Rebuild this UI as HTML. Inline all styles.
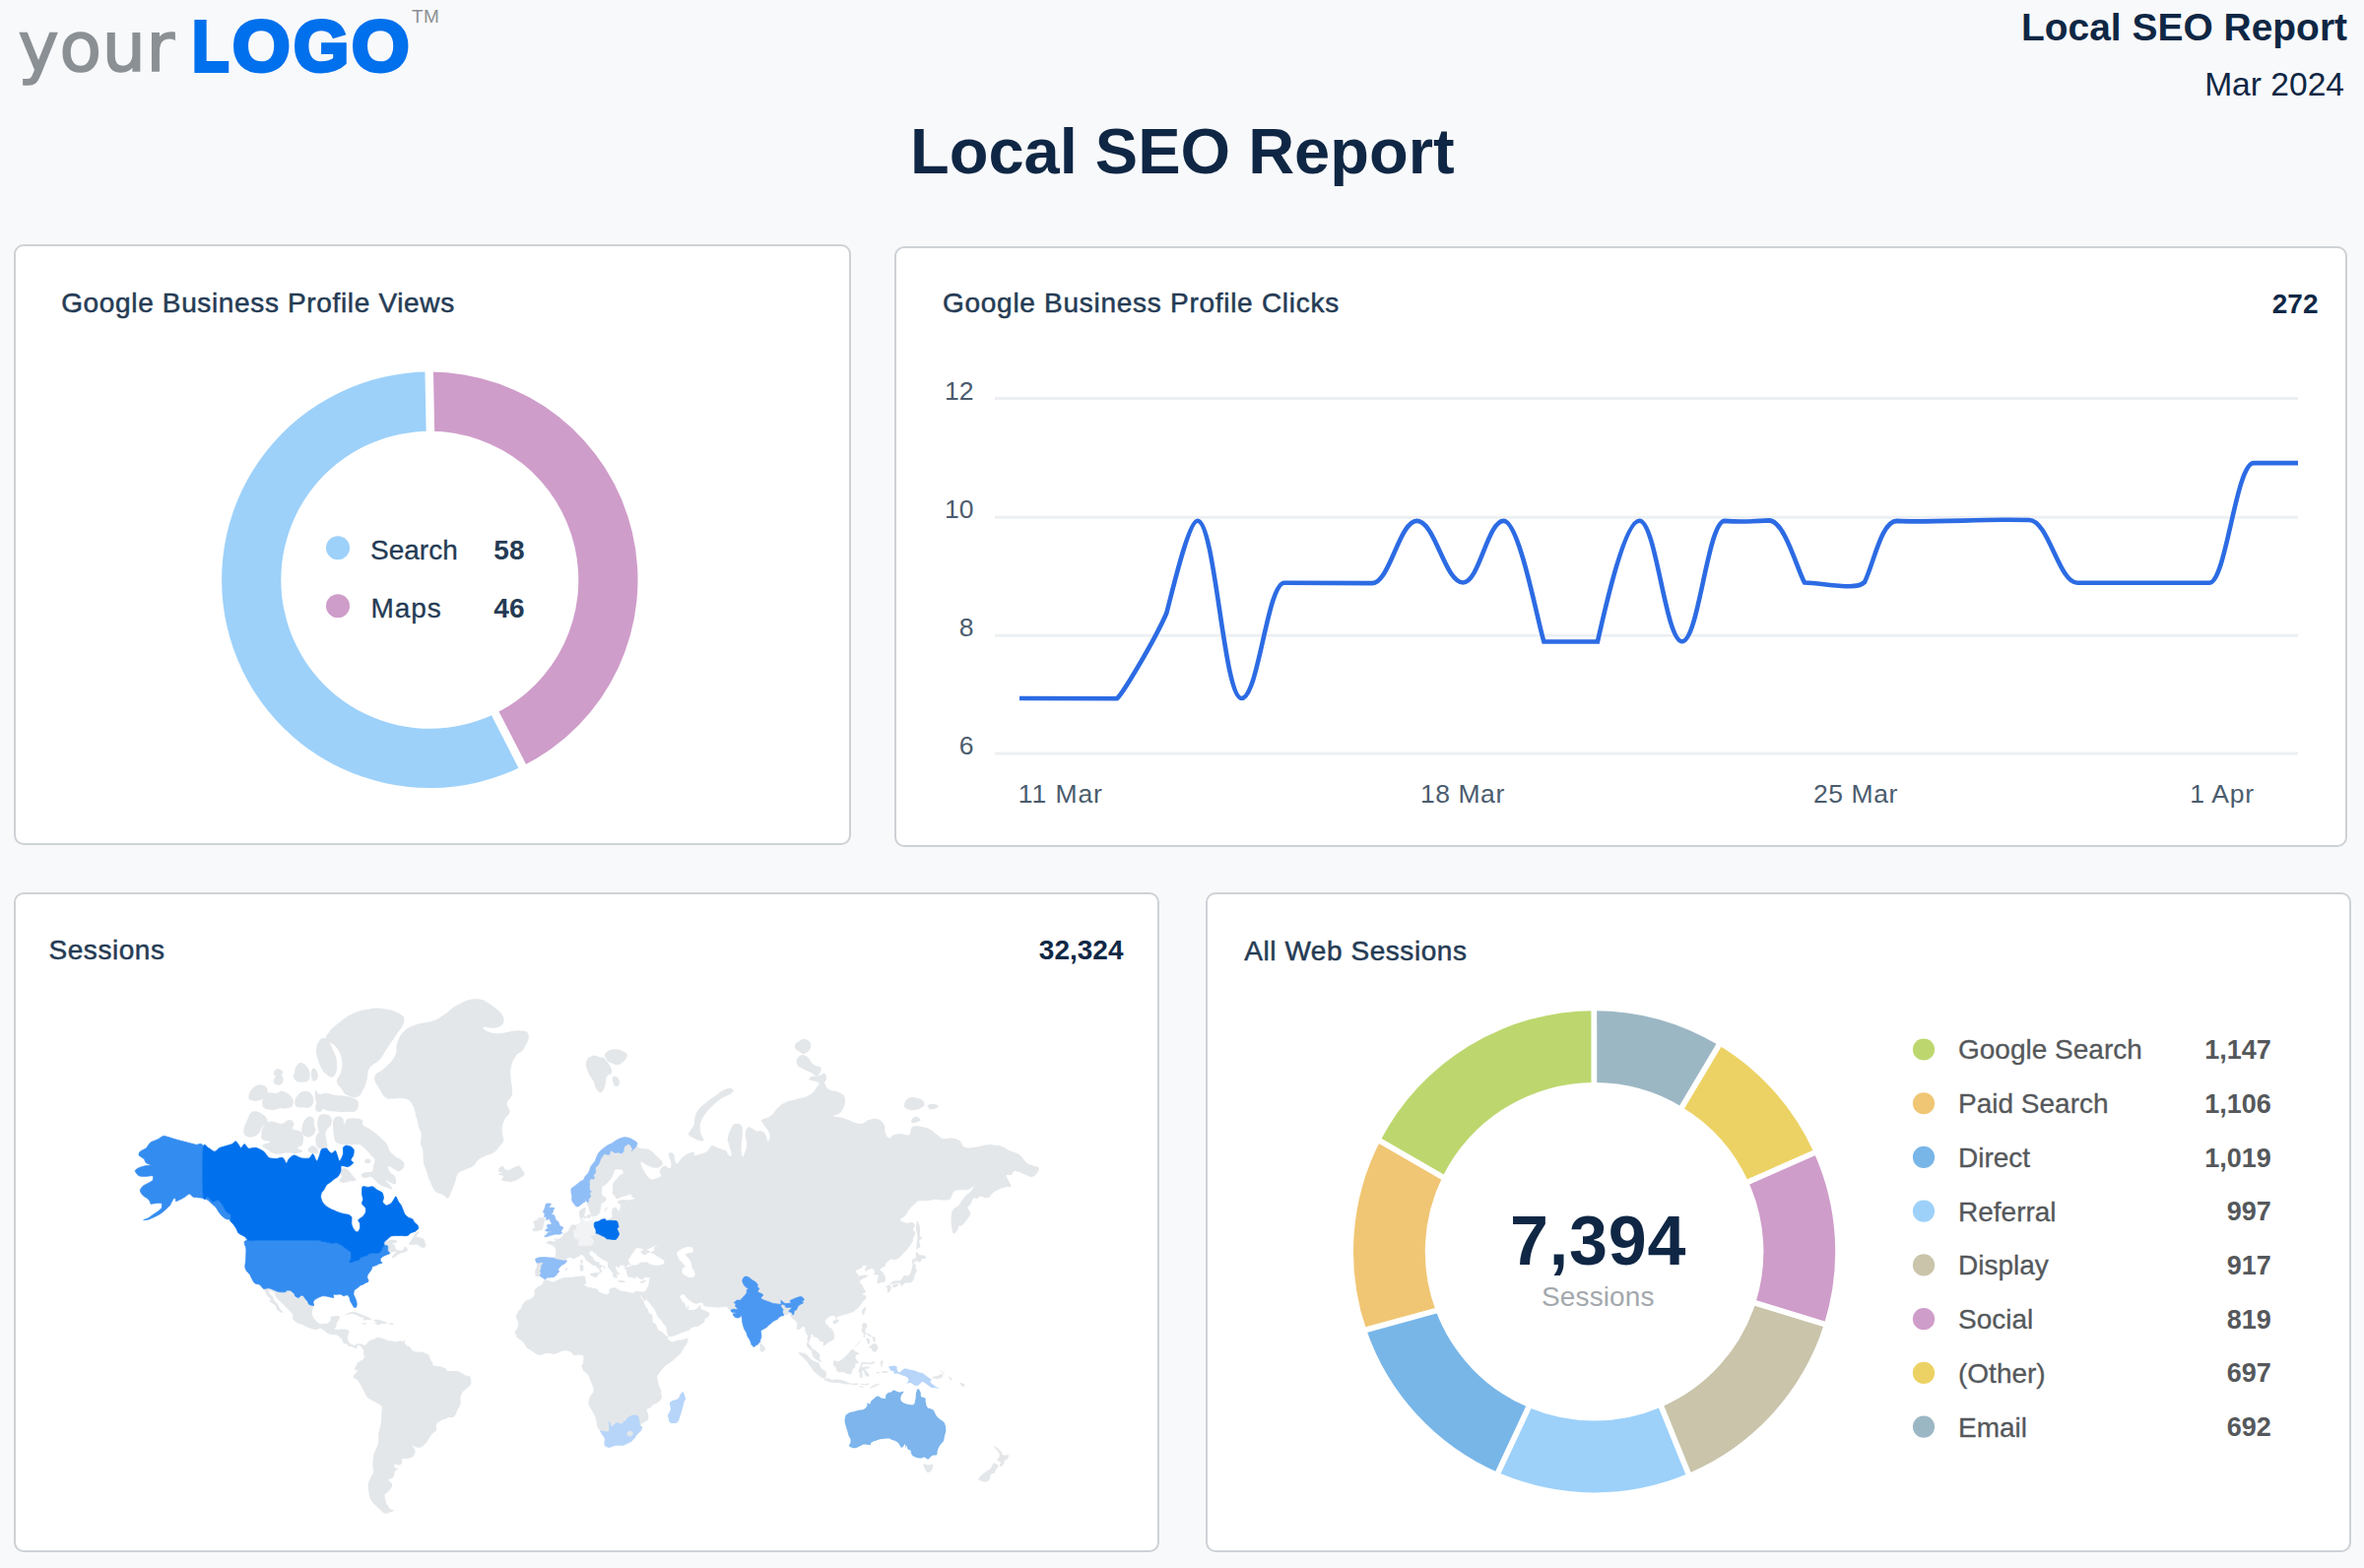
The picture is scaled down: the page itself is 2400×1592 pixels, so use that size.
<!DOCTYPE html>
<html lang="en"><head><meta charset="utf-8"><title>Local SEO Report</title><style>
*{margin:0;padding:0;box-sizing:border-box}
html,body{width:2400px;height:1592px;overflow:hidden;background:#f8f9fb;font-family:"Liberation Sans", sans-serif;}
.t{position:absolute;line-height:1;white-space:nowrap;}
.card{position:absolute;background:#fff;border:2px solid #cdd2d6;border-radius:10px;}
svg{position:absolute;left:0;top:0;overflow:visible}
</style></head>
<body>
<div class="card" style="left:14px;top:248px;width:850px;height:610px"></div>
<div class="card" style="left:908px;top:250px;width:1475px;height:610px"></div>
<div class="card" style="left:14px;top:906px;width:1163px;height:670px"></div>
<div class="card" style="left:1224px;top:906px;width:1163px;height:670px"></div>
<svg width="2400" height="1592" viewBox="0 0 2400 1592">
<path d="M435.71,377.60A211.2,211.2 0 0 1 530.27,777.94L502.78,724.38A151,151 0 0 0 436.91,437.80Z" fill="#cf9dca"/>
<path d="M530.27,777.94A211.2,211.2 0 1 1 435.71,377.60L436.91,437.80A151,151 0 1 0 502.78,724.38Z" fill="#9dd1fa"/>
<line x1="436.99" y1="441.80" x2="435.63" y2="373.60" stroke="#fff" stroke-width="8.5"/>
<line x1="500.95" y1="720.82" x2="532.10" y2="781.50" stroke="#fff" stroke-width="8.5"/>
<circle cx="343" cy="556.3" r="12" fill="#9dd1fa"/><circle cx="343" cy="615.2" r="12" fill="#cf9dca"/>
<line x1="1010" y1="404.5" x2="2333" y2="404.5" stroke="#edf0f3" stroke-width="3"/>
<line x1="1010" y1="525.3" x2="2333" y2="525.3" stroke="#edf0f3" stroke-width="3"/>
<line x1="1010" y1="645.2" x2="2333" y2="645.2" stroke="#edf0f3" stroke-width="3"/>
<line x1="1010" y1="765" x2="2333" y2="765" stroke="#edf0f3" stroke-width="3"/>
<path d="M1035,709 L1134,709.2 C1140,704 1172.3,650.1 1184.3,622.5 C1191.3,596.2 1206.8,528.7 1215.8,528.7 C1233.6,528.7 1242.5,709 1260.3,709 C1277.8,709 1286.5,591.7 1304,591.7 L1393,592.1 C1411,592.1 1420.5,528.9 1438.5,528.9 C1457,528.9 1466.9,591.5 1485.4,591.5 C1501.9,591.5 1510.1,528.9 1526.6,528.9 C1542.6,528.9 1561.4,633.5 1567.4,651.5 L1621.9,651.5 C1626.9,630 1648.4,528.7 1664.4,528.7 C1681.4,528.7 1690.7,651.3 1707.7,651.3 C1724.7,651.3 1733.5,528.9 1751,528.9 C1765,530 1782,529.3 1796,528.4 C1812,528.4 1825,580 1832,591.5 C1845,592 1865,595.5 1878,595.3 C1886,595.2 1890,594 1893,591 C1903,570 1910,528.9 1926,528.9 C1945,530.5 2000,528 2040,527.7 L2060,528 C2080,528.3 2090,591.8 2109,591.8 L2243,591.8 C2260,591.8 2270,470.1 2288,470.1 L2333,470.1" fill="none" stroke="#2c6be3" stroke-width="4.6" stroke-linejoin="miter" stroke-linecap="butt"/>
<path d="M1618.30,1026.20A244.6,244.6 0 0 1 1744.91,1061.34L1707.70,1123.91A171.8,171.8 0 0 0 1618.39,1099.00Z" fill="#9cb7c4"/>
<path d="M1744.91,1061.34A244.6,244.6 0 0 1 1841.69,1170.49L1775.09,1199.91A171.8,171.8 0 0 0 1707.70,1123.91Z" fill="#ecd264"/>
<path d="M1841.69,1170.49A244.6,244.6 0 0 1 1851.92,1344.23L1782.30,1322.92A171.8,171.8 0 0 0 1775.09,1199.91Z" fill="#cf9dca"/>
<path d="M1851.92,1344.23A244.6,244.6 0 0 1 1714.02,1496.02L1686.72,1428.52A171.8,171.8 0 0 0 1782.30,1322.92Z" fill="#c9c4aa"/>
<path d="M1714.02,1496.02A244.6,244.6 0 0 1 1520.87,1495.03L1551.75,1429.06A171.8,171.8 0 0 0 1686.72,1428.52Z" fill="#9dd1fa"/>
<path d="M1520.87,1495.03A244.6,244.6 0 0 1 1387.20,1350.07L1457.64,1330.85A171.8,171.8 0 0 0 1551.75,1429.06Z" fill="#78b6e8"/>
<path d="M1387.20,1350.07A244.6,244.6 0 0 1 1401.26,1158.58L1464.41,1195.03A171.8,171.8 0 0 0 1457.64,1330.85Z" fill="#f0c674"/>
<path d="M1401.26,1158.58A244.6,244.6 0 0 1 1618.30,1026.20L1618.39,1099.00A171.8,171.8 0 0 0 1464.41,1195.03Z" fill="#bdd76e"/>
<line x1="1618.39" y1="1103.00" x2="1618.30" y2="1022.20" stroke="#fff" stroke-width="5.8"/>
<line x1="1705.66" y1="1127.35" x2="1746.95" y2="1057.90" stroke="#fff" stroke-width="5.8"/>
<line x1="1771.43" y1="1201.53" x2="1845.35" y2="1168.88" stroke="#fff" stroke-width="5.8"/>
<line x1="1778.48" y1="1321.75" x2="1855.74" y2="1345.40" stroke="#fff" stroke-width="5.8"/>
<line x1="1685.22" y1="1424.81" x2="1715.52" y2="1499.73" stroke="#fff" stroke-width="5.8"/>
<line x1="1553.44" y1="1425.44" x2="1519.17" y2="1498.65" stroke="#fff" stroke-width="5.8"/>
<line x1="1461.50" y1="1329.80" x2="1383.34" y2="1351.12" stroke="#fff" stroke-width="5.8"/>
<line x1="1467.88" y1="1197.03" x2="1397.80" y2="1156.58" stroke="#fff" stroke-width="5.8"/>
<circle cx="1953" cy="1065.50" r="11.1" fill="#bdd76e"/>
<circle cx="1953" cy="1120.23" r="11.1" fill="#f0c674"/>
<circle cx="1953" cy="1174.96" r="11.1" fill="#78b6e8"/>
<circle cx="1953" cy="1229.69" r="11.1" fill="#9dd1fa"/>
<circle cx="1953" cy="1284.42" r="11.1" fill="#c9c4aa"/>
<circle cx="1953" cy="1339.15" r="11.1" fill="#cf9dca"/>
<circle cx="1953" cy="1393.88" r="11.1" fill="#ecd264"/>
<circle cx="1953" cy="1448.61" r="11.1" fill="#9cb7c4"/>
<g id="worldmap" stroke-linejoin="round">
<path d="M267.5,1308.4C268.7,1307.7 270.0,1307.2 273.7,1307.9C277.3,1308.7 279.3,1310.8 283.1,1311.6C287.0,1312.5 288.6,1311.9 290.3,1311.6C292.0,1311.3 289.3,1310.6 290.3,1310.3C291.3,1310.0 292.7,1309.6 294.7,1310.3C296.6,1311.0 297.6,1312.1 298.8,1313.5C300.0,1314.8 298.7,1315.1 299.8,1316.1C300.9,1317.0 302.1,1317.7 303.4,1317.6C304.6,1317.5 304.1,1316.0 305.2,1315.5C306.2,1315.1 306.5,1314.6 307.7,1315.5C309.0,1316.4 309.4,1318.0 310.5,1319.4C311.7,1320.8 311.9,1320.3 312.6,1321.4C313.3,1322.6 312.2,1323.3 313.6,1324.2C315.0,1325.2 317.6,1324.1 318.5,1325.5C319.3,1326.9 317.5,1328.1 317.2,1330.2C316.8,1332.2 316.6,1332.5 316.9,1334.3C317.2,1336.2 317.4,1336.2 318.5,1338.0C319.5,1339.7 319.9,1340.3 321.5,1341.8C323.2,1343.2 323.6,1343.7 325.4,1344.2C327.2,1344.6 327.4,1343.9 329.2,1343.7C331.0,1343.5 331.6,1344.0 333.1,1343.2C334.5,1342.4 334.6,1341.8 335.4,1340.4C336.1,1338.9 334.6,1338.0 336.1,1337.0C337.7,1336.0 339.9,1336.1 342.0,1336.0C344.1,1336.0 344.5,1336.1 345.1,1336.8C345.7,1337.4 345.0,1337.7 344.6,1338.7C344.2,1339.7 344.0,1339.9 343.3,1341.1C342.6,1342.2 342.2,1342.3 341.8,1343.7C341.3,1345.1 341.7,1345.6 341.3,1347.0C340.8,1348.4 339.2,1348.9 339.7,1349.6C340.2,1350.2 341.6,1349.8 343.3,1349.8C345.0,1349.8 345.3,1349.6 347.1,1349.6C348.9,1349.6 349.3,1349.3 351.0,1349.8C352.7,1350.3 353.7,1350.7 354.3,1351.7C355.0,1352.7 354.1,1352.6 353.8,1354.0C353.5,1355.3 353.1,1355.9 353.0,1357.5C352.9,1359.1 352.9,1359.6 353.3,1360.9C353.7,1362.2 353.9,1362.2 354.8,1363.2C355.8,1364.2 356.2,1364.4 357.4,1365.0C358.6,1365.6 358.5,1365.9 359.9,1365.7C361.4,1365.5 362.0,1364.6 363.5,1364.3C365.0,1364.1 365.0,1364.1 366.3,1364.6C367.7,1365.0 368.9,1365.0 369.4,1366.2C369.9,1367.3 368.8,1368.9 368.4,1369.6C368.0,1370.2 368.1,1369.5 367.6,1368.9C367.1,1368.3 367.2,1367.8 366.3,1367.1C365.4,1366.3 364.7,1365.7 363.8,1365.7C362.9,1365.8 363.1,1366.4 362.5,1367.3C361.9,1368.1 362.4,1369.3 361.2,1369.3C360.0,1369.3 358.9,1367.8 357.4,1367.3C355.9,1366.8 355.7,1367.5 354.8,1367.3C353.9,1367.1 354.1,1367.2 353.5,1366.6C352.9,1366.0 353.3,1365.4 352.3,1364.8C351.2,1364.2 350.2,1364.5 349.2,1363.9C348.2,1363.2 348.4,1363.0 347.9,1362.1C347.4,1361.1 347.9,1360.8 347.1,1359.8C346.4,1358.7 345.7,1358.4 344.6,1357.5C343.5,1356.6 344.0,1356.4 342.5,1355.8C341.0,1355.3 340.4,1355.6 338.2,1355.2C336.0,1354.7 334.9,1354.7 333.1,1354.0C331.3,1353.3 332.0,1353.2 330.5,1352.1C329.0,1351.1 328.2,1350.1 326.7,1349.3C325.2,1348.6 325.6,1348.7 324.1,1348.9C322.6,1349.0 322.1,1350.0 320.3,1350.0C318.5,1350.1 318.5,1349.7 316.4,1349.1C314.4,1348.5 313.9,1348.4 311.6,1347.3C309.2,1346.3 308.0,1345.4 306.2,1344.6C304.3,1343.8 305.1,1344.6 303.6,1343.9C302.1,1343.3 301.3,1343.0 299.8,1341.8C298.3,1340.6 297.8,1340.3 297.2,1338.7C296.6,1337.1 297.8,1336.6 297.2,1335.1C296.7,1333.5 296.1,1333.6 294.9,1332.1C293.7,1330.7 293.4,1330.3 292.1,1328.9C290.8,1327.6 290.7,1327.6 289.5,1326.5C288.3,1325.3 288.5,1325.4 287.0,1324.0C285.5,1322.5 284.6,1321.6 283.1,1320.2C281.6,1318.7 281.5,1318.8 280.6,1317.6C279.7,1316.4 279.9,1316.4 279.3,1315.0C278.7,1313.7 279.4,1312.9 278.0,1311.9C276.6,1310.8 274.3,1310.1 273.4,1310.6C272.5,1311.0 273.4,1312.4 274.2,1313.7C275.0,1315.1 275.8,1315.1 276.7,1316.3C277.6,1317.5 277.4,1317.7 278.0,1318.9C278.6,1320.1 278.4,1320.3 279.3,1321.4C280.2,1322.6 281.0,1322.8 281.9,1324.0C282.8,1325.1 282.4,1325.2 283.1,1326.5C283.9,1327.7 284.0,1328.3 284.9,1329.4C285.8,1330.6 286.7,1330.6 287.0,1331.4C287.2,1332.2 286.6,1332.8 286.0,1332.9C285.4,1333.0 285.7,1332.8 284.4,1331.9C283.2,1331.0 281.6,1330.2 280.6,1328.9C279.6,1327.7 281.0,1327.7 280.1,1326.5C279.2,1325.2 278.4,1324.8 276.7,1323.5C275.1,1322.1 273.3,1321.4 272.9,1320.7C272.5,1319.9 274.8,1320.9 274.9,1320.2C275.1,1319.4 274.4,1318.8 273.4,1317.6C272.5,1316.4 271.9,1316.5 270.9,1315.0C269.8,1313.5 269.6,1312.6 268.8,1311.1C268.0,1309.6 266.4,1309.2 267.5,1308.4Z" fill="#e4e7ea"/>
<path d="M350.0,1335.3C350.3,1334.9 352.5,1333.4 354.8,1332.6C357.1,1331.9 357.6,1331.9 359.9,1332.1C362.3,1332.4 362.7,1333.0 365.1,1333.8C367.4,1334.7 367.8,1334.8 370.2,1335.8C372.6,1336.8 373.6,1337.4 375.3,1338.2C377.0,1339.0 377.6,1339.0 377.3,1339.4C377.0,1339.8 376.1,1339.9 374.0,1340.1C371.9,1340.3 369.4,1340.6 368.4,1340.2C367.4,1339.8 370.1,1339.1 369.7,1338.4C369.2,1337.8 368.3,1338.3 366.3,1337.5C364.4,1336.7 363.3,1335.9 361.2,1335.1C359.1,1334.3 359.2,1334.2 357.4,1334.1C355.6,1334.0 355.3,1334.3 353.5,1334.6C351.8,1334.9 349.7,1335.8 350.0,1335.3Z" fill="#e4e7ea"/>
<path d="M376.8,1343.7C376.8,1343.9 380.1,1343.8 381.7,1344.2C383.3,1344.5 382.3,1345.2 383.7,1345.1C385.2,1345.1 386.1,1344.2 388.1,1343.9C390.1,1343.7 391.3,1344.3 392.2,1343.9C393.1,1343.6 392.8,1343.1 391.9,1342.5C391.1,1341.9 390.4,1341.9 388.6,1341.3C386.8,1340.8 386.4,1340.4 384.3,1340.1C382.2,1339.8 380.4,1339.6 379.7,1340.1C378.9,1340.6 380.7,1341.5 381.2,1342.3C381.7,1343.0 383.0,1342.9 382.0,1343.2C380.9,1343.5 376.9,1343.5 376.8,1343.7Z" fill="#e4e7ea"/>
<path d="M366.9,1344.0C367.9,1344.4 370.9,1344.9 372.0,1344.8C373.0,1344.6 372.5,1343.9 371.5,1343.6C370.4,1343.3 368.7,1343.3 367.6,1343.5C366.5,1343.6 365.8,1343.7 366.9,1344.0Z" fill="#e4e7ea"/>
<path d="M395.3,1344.6C396.2,1344.9 398.2,1344.8 399.1,1344.5C400.0,1344.3 400.0,1343.8 399.1,1343.6C398.2,1343.3 396.2,1343.2 395.3,1343.5C394.4,1343.7 394.4,1344.4 395.3,1344.6Z" fill="#e4e7ea"/>
<path d="M369.4,1366.2C370.2,1365.0 370.8,1365.8 372.0,1364.8C373.1,1363.8 373.1,1362.8 374.3,1361.8C375.5,1360.8 375.7,1361.0 377.1,1360.5C378.5,1359.9 378.9,1359.9 380.4,1359.3C381.9,1358.7 382.1,1357.9 383.5,1357.7C384.9,1357.5 385.1,1358.0 386.6,1358.4C388.1,1358.8 388.2,1358.7 389.9,1359.3C391.6,1359.9 391.8,1360.5 393.7,1361.1C395.7,1361.7 396.4,1361.6 398.3,1361.8C400.3,1362.1 400.4,1362.3 402.2,1362.3C404.0,1362.2 404.4,1361.6 406.0,1361.6C407.6,1361.6 407.8,1361.5 409.1,1362.3C410.4,1363.0 410.6,1363.8 411.7,1364.8C412.7,1365.8 412.6,1365.9 413.7,1366.6C414.8,1367.3 415.2,1366.9 416.3,1367.8C417.3,1368.7 417.1,1369.4 418.3,1370.5C419.5,1371.5 419.5,1371.8 421.4,1372.3C423.3,1372.8 424.7,1372.4 426.5,1372.5C428.3,1372.6 427.4,1372.2 429.1,1372.7C430.7,1373.3 431.9,1374.0 433.4,1374.8C434.9,1375.5 434.5,1374.4 435.5,1375.9C436.4,1377.4 436.6,1379.5 437.5,1381.3C438.4,1383.1 438.9,1382.5 439.3,1383.6C439.7,1384.6 438.4,1385.0 439.3,1385.8C440.2,1386.6 441.3,1386.8 443.1,1387.1C444.9,1387.5 444.9,1386.9 447.0,1387.4C449.1,1387.8 450.5,1388.2 452.1,1389.2C453.7,1390.1 452.1,1390.7 453.9,1391.4C455.7,1392.1 457.2,1391.9 459.8,1392.1C462.3,1392.3 462.8,1391.9 464.9,1392.3C467.0,1392.8 466.9,1393.1 468.7,1394.1C470.5,1395.1 470.7,1395.8 472.6,1396.6C474.5,1397.4 475.6,1396.2 476.9,1397.5C478.2,1398.8 478.0,1400.0 478.2,1402.0C478.4,1404.0 478.7,1404.4 477.7,1406.1C476.7,1407.9 475.4,1408.2 473.9,1409.5C472.4,1410.9 472.5,1410.5 471.3,1411.8C470.1,1413.2 469.6,1413.4 468.7,1415.3C467.8,1417.2 467.8,1417.5 467.5,1419.9C467.2,1422.4 467.9,1423.6 467.5,1425.8C467.0,1428.0 466.4,1427.8 465.7,1429.3C464.9,1430.9 464.9,1430.8 464.1,1432.4C463.4,1434.1 463.4,1435.0 462.3,1436.5C461.3,1438.1 461.3,1438.4 459.8,1439.0C458.3,1439.5 457.7,1438.6 455.9,1439.0C454.1,1439.4 453.9,1440.0 452.1,1440.7C450.3,1441.4 450.1,1441.0 448.3,1441.9C446.5,1442.8 445.7,1443.3 444.4,1444.6C443.2,1446.0 443.2,1445.9 442.9,1447.6C442.5,1449.4 443.7,1450.4 442.9,1452.2C442.0,1454.0 441.0,1453.3 439.3,1455.3C437.6,1457.2 437.0,1458.4 435.5,1460.5C434.0,1462.7 434.1,1462.9 432.9,1464.5C431.7,1466.1 431.8,1466.0 430.3,1467.2C428.9,1468.4 428.4,1469.1 426.8,1469.6C425.1,1470.2 425.3,1470.0 423.4,1469.6C421.6,1469.3 419.4,1467.6 418.8,1468.0C418.2,1468.4 420.3,1469.9 420.9,1471.3C421.5,1472.7 421.6,1472.4 421.4,1474.1C421.1,1475.7 421.0,1476.9 419.8,1478.3C418.6,1479.8 418.6,1479.6 416.3,1480.3C413.9,1481.0 411.8,1481.0 409.9,1481.2C407.9,1481.4 408.5,1480.2 408.1,1481.2C407.6,1482.2 408.8,1484.1 408.1,1485.6C407.3,1487.1 406.4,1487.4 404.7,1487.7C403.1,1487.9 401.8,1485.9 400.9,1486.5C400.0,1487.0 400.1,1488.9 400.9,1490.1C401.7,1491.3 404.2,1490.7 404.2,1491.6C404.2,1492.5 402.0,1492.2 400.9,1494.0C399.8,1495.9 401.1,1497.4 399.6,1499.4C398.1,1501.4 394.8,1500.7 394.5,1502.6C394.2,1504.5 398.3,1504.8 398.3,1507.5C398.3,1510.2 396.3,1511.9 394.5,1514.3C392.7,1516.7 391.3,1515.5 390.7,1517.8C390.1,1520.1 391.5,1522.2 391.9,1524.3C392.4,1526.4 391.5,1524.9 392.7,1526.9C393.9,1528.8 395.3,1531.1 397.1,1532.6C398.9,1534.1 400.7,1532.7 400.4,1533.4C400.1,1534.0 398.0,1534.6 395.8,1535.3C393.5,1536.0 393.0,1537.1 390.7,1536.5C388.3,1535.9 387.6,1534.4 385.5,1532.6C383.4,1530.8 383.5,1530.5 381.7,1528.7C379.9,1527.0 379.4,1527.2 377.9,1525.0C376.4,1522.9 376.2,1522.5 375.3,1519.6C374.4,1516.7 374.3,1515.8 374.0,1512.6C373.7,1509.4 373.4,1508.9 374.0,1505.8C374.6,1502.8 375.4,1502.0 376.6,1499.4C377.8,1496.8 378.7,1497.0 379.1,1494.7C379.6,1492.3 378.5,1491.9 378.4,1489.5C378.3,1487.0 378.4,1486.7 378.6,1484.1C378.8,1481.5 378.8,1480.3 379.1,1478.3C379.4,1476.3 379.3,1477.1 379.9,1475.5C380.5,1473.8 380.7,1473.9 381.7,1471.3C382.7,1468.7 383.4,1467.9 384.0,1464.5C384.6,1461.1 383.9,1459.9 384.3,1456.6C384.6,1453.2 384.9,1453.1 385.5,1450.2C386.1,1447.2 386.4,1447.1 386.8,1443.9C387.2,1440.7 387.2,1439.4 387.3,1436.5C387.5,1433.7 387.6,1433.7 387.6,1431.7C387.6,1429.7 388.1,1429.4 387.3,1427.9C386.6,1426.4 385.9,1426.4 384.3,1425.3C382.6,1424.3 382.5,1424.5 380.4,1423.4C378.3,1422.3 377.3,1422.0 375.3,1420.6C373.3,1419.2 373.3,1419.2 372.0,1417.4C370.7,1415.6 370.7,1414.9 369.7,1413.0C368.7,1411.1 368.7,1411.1 367.6,1409.1C366.5,1407.1 366.2,1406.4 365.1,1404.5C363.9,1402.7 364.1,1402.5 362.8,1401.1C361.4,1399.8 360.3,1400.0 359.4,1398.9C358.6,1397.8 358.6,1397.6 359.2,1396.4C359.7,1395.1 360.9,1394.6 361.7,1393.5C362.6,1392.3 363.1,1392.0 362.8,1391.4C362.4,1390.8 360.7,1391.8 360.2,1391.0C359.7,1390.2 360.2,1389.3 360.7,1388.0C361.2,1386.8 361.8,1386.7 362.2,1385.8C362.7,1384.9 361.8,1384.8 362.5,1384.0C363.2,1383.2 364.3,1383.0 365.1,1382.4C365.8,1381.9 364.7,1382.4 365.6,1381.8C366.5,1381.1 367.9,1380.8 368.9,1379.7C369.9,1378.7 369.7,1378.7 369.7,1377.2C369.7,1375.8 369.0,1374.8 368.9,1373.4C368.8,1372.0 369.3,1372.0 369.2,1371.2C369.0,1370.3 368.3,1370.7 368.4,1369.6C368.4,1368.4 368.6,1367.3 369.4,1366.2Z" fill="#e4e7ea"/>
<path d="M454.7,1216.6C452.9,1216.7 452.2,1214.3 449.5,1212.9C446.9,1211.5 445.5,1212.4 443.1,1210.6C440.8,1208.9 440.8,1208.0 439.3,1205.4C437.8,1202.8 437.8,1201.7 436.7,1199.5C435.7,1197.2 435.8,1198.3 434.9,1195.9C434.1,1193.4 434.0,1192.3 432.9,1189.0C431.8,1185.7 431.1,1184.8 430.3,1181.8C429.6,1178.7 429.9,1179.5 429.6,1175.9C429.3,1172.4 429.7,1170.2 429.1,1166.7C428.5,1163.2 427.3,1164.3 427.0,1160.9C426.7,1157.4 428.2,1155.7 427.8,1152.0C427.4,1148.2 426.4,1148.7 425.2,1144.7C424.0,1140.6 424.2,1139.9 422.7,1134.6C421.2,1129.3 421.5,1126.4 418.8,1121.9C416.1,1117.5 415.9,1117.0 411.1,1115.6C406.4,1114.1 402.8,1115.8 398.3,1115.6C393.9,1115.3 394.9,1116.9 391.9,1114.6C389.0,1112.4 388.2,1110.9 385.5,1105.9C382.9,1101.0 379.2,1098.4 380.4,1093.3C381.6,1088.3 385.9,1089.2 390.7,1084.2C395.4,1079.2 397.9,1078.0 400.9,1071.9C403.9,1065.8 401.1,1064.2 403.5,1058.3C405.8,1052.3 406.4,1050.5 411.1,1046.2C415.9,1041.9 417.4,1042.0 423.9,1039.7C430.5,1037.5 432.7,1038.8 439.3,1036.4C445.9,1034.0 446.1,1033.2 452.1,1029.4C458.1,1025.6 457.7,1023.7 464.9,1020.1C472.1,1016.6 475.1,1014.2 482.8,1014.2C490.6,1014.2 491.6,1015.7 498.2,1020.1C504.8,1024.5 509.2,1027.6 511.0,1032.9C512.8,1038.3 510.6,1040.7 505.9,1043.0C501.1,1045.4 491.1,1041.5 490.5,1043.0C489.9,1044.5 494.9,1048.6 503.3,1049.3C511.7,1050.1 518.6,1045.9 526.3,1046.2C534.1,1046.6 535.4,1046.4 536.6,1050.9C537.8,1055.3 534.4,1060.3 531.5,1065.2C528.5,1070.2 526.8,1067.5 523.8,1071.9C520.8,1076.3 519.9,1078.7 518.7,1084.2C517.5,1089.8 518.4,1089.3 518.7,1095.5C519.0,1101.7 520.8,1105.1 519.9,1110.8C519.0,1116.6 515.4,1115.9 514.8,1120.1C514.2,1124.3 518.0,1124.9 517.4,1128.8C516.8,1132.8 514.1,1132.9 512.3,1137.0C510.5,1141.0 510.0,1141.9 509.7,1146.2C509.4,1150.5 510.7,1152.5 511.0,1155.5C511.3,1158.4 512.2,1156.5 511.0,1158.9C509.8,1161.2 508.2,1162.7 505.9,1165.4C503.5,1168.2 503.7,1168.6 500.7,1170.5C497.8,1172.4 496.6,1171.9 493.1,1173.5C489.5,1175.2 488.4,1175.3 485.4,1177.7C482.4,1180.2 483.5,1181.7 480.3,1184.0C477.0,1186.4 474.9,1186.1 471.3,1187.9C467.7,1189.7 467.0,1189.0 464.9,1191.7C462.8,1194.4 463.5,1196.2 462.3,1199.5C461.1,1202.8 461.0,1202.8 459.8,1205.9C458.6,1208.9 458.4,1210.0 457.2,1212.5C456.0,1215.0 456.5,1216.5 454.7,1216.6Z" fill="#e4e7ea"/>
<path d="M505.9,1189.0C505.9,1187.5 507.6,1184.3 509.7,1184.0C511.8,1183.8 512.1,1187.5 514.8,1187.9C517.5,1188.3 518.5,1186.8 521.2,1185.7C523.9,1184.7 524.3,1183.1 526.3,1183.5C528.4,1183.9 528.5,1185.5 529.9,1187.4C531.4,1189.3 532.7,1189.8 532.5,1191.7C532.2,1193.6 531.5,1193.6 528.9,1195.4C526.3,1197.2 524.5,1198.5 521.2,1199.5C517.9,1200.4 517.6,1199.8 514.8,1199.5C512.0,1199.1 510.1,1199.1 509.2,1197.9C508.3,1196.7 511.8,1195.7 511.0,1194.3C510.2,1193.0 506.2,1193.1 505.9,1192.2C505.6,1191.4 509.7,1191.4 509.7,1190.6C509.7,1189.9 505.9,1190.5 505.9,1189.0Z" fill="#e4e7ea"/>
<path d="M398.3,1207.3C397.7,1208.0 395.6,1206.7 393.2,1205.9C390.8,1205.1 390.2,1204.8 388.1,1203.9C386.0,1203.0 386.1,1203.4 384.3,1202.0C382.5,1200.6 382.2,1199.6 380.4,1197.9C378.6,1196.3 378.7,1195.3 376.6,1194.9C374.5,1194.4 373.6,1195.9 371.5,1195.9C369.4,1195.9 368.5,1195.8 367.6,1194.9C366.7,1193.9 366.4,1192.8 367.6,1191.7C368.8,1190.6 370.4,1190.7 372.7,1190.1C375.1,1189.5 376.4,1190.5 377.9,1189.0C379.4,1187.5 378.5,1186.1 379.1,1183.5C379.7,1180.8 381.0,1180.2 380.4,1177.7C379.8,1175.3 378.4,1175.1 376.6,1172.9C374.8,1170.8 374.5,1170.5 372.7,1168.6C370.9,1166.7 370.7,1166.3 368.9,1164.8C367.1,1163.3 367.7,1162.8 365.1,1162.2C362.4,1161.6 361.0,1162.2 357.4,1162.2C353.8,1162.2 353.3,1162.7 349.7,1162.2C346.1,1161.7 344.4,1161.8 342.0,1160.2C339.6,1158.6 340.4,1159.1 339.5,1155.5C338.6,1151.8 338.2,1149.4 338.2,1144.7C338.2,1140.0 337.4,1137.7 339.5,1135.4C341.6,1133.0 344.8,1133.3 347.1,1134.6C349.5,1135.9 348.5,1140.5 349.7,1140.9C350.9,1141.3 350.5,1137.5 352.3,1136.2C354.1,1134.9 355.3,1135.6 357.4,1135.4C359.5,1135.2 358.8,1135.0 361.2,1135.4C363.6,1135.8 365.8,1135.3 367.6,1137.0C369.4,1138.6 367.1,1140.3 368.9,1142.4C370.7,1144.6 372.0,1143.9 375.3,1146.2C378.6,1148.4 380.0,1149.5 383.0,1152.0C386.0,1154.4 385.7,1154.4 388.1,1156.8C390.5,1159.2 391.4,1159.4 393.2,1162.2C395.0,1164.9 393.7,1165.7 395.8,1168.6C397.9,1171.5 399.5,1172.6 402.2,1174.8C404.9,1176.9 405.4,1175.8 407.3,1177.7C409.2,1179.6 410.7,1180.3 410.4,1182.9C410.1,1185.5 408.2,1188.0 406.0,1189.0C403.8,1190.0 403.6,1188.5 400.9,1187.4C398.2,1186.2 395.7,1183.4 394.5,1184.0C393.3,1184.7 394.3,1187.7 395.8,1190.1C397.3,1192.5 399.5,1191.6 400.9,1194.3C402.3,1197.1 402.6,1200.4 401.7,1202.0C400.8,1203.5 399.3,1201.8 397.1,1201.0C394.8,1200.1 392.2,1198.0 391.9,1198.4C391.6,1198.9 394.3,1200.9 395.8,1202.9C397.3,1205.0 398.9,1206.6 398.3,1207.3Z" fill="#e4e7ea"/>
<path d="M362.5,1113.7C366.4,1112.3 366.5,1110.2 368.9,1105.9C371.3,1101.7 371.2,1100.6 372.7,1095.5C374.2,1090.5 372.3,1088.9 375.3,1084.2C378.3,1079.6 381.4,1080.5 385.5,1075.7C389.7,1071.0 389.3,1069.7 393.2,1063.9C397.1,1058.1 398.3,1056.9 402.2,1050.9C406.1,1044.8 409.0,1043.1 409.9,1038.1C410.8,1033.1 411.1,1032.7 406.0,1029.4C400.9,1026.1 395.9,1025.0 388.1,1023.9C380.3,1022.8 379.9,1023.6 372.7,1024.8C365.6,1026.1 364.0,1026.3 357.4,1029.4C350.8,1032.5 350.0,1033.8 344.6,1038.1C339.2,1042.4 337.3,1043.8 334.3,1047.8C331.4,1051.8 330.0,1051.6 331.8,1055.3C333.6,1059.1 338.4,1058.8 342.0,1063.9C345.6,1068.9 346.2,1071.1 347.1,1077.0C348.0,1082.8 347.1,1084.0 345.9,1088.9C344.7,1093.7 341.7,1093.7 342.0,1097.7C342.3,1101.7 344.8,1102.6 347.1,1105.9C349.5,1109.2 348.7,1110.0 352.3,1111.8C355.8,1113.6 358.6,1115.1 362.5,1113.7Z" fill="#e4e7ea"/>
<path d="M321.5,1062.5C323.0,1056.5 326.6,1052.9 330.5,1053.9C334.4,1054.8 335.5,1060.6 338.2,1066.6C340.9,1072.6 341.7,1073.5 342.0,1079.4C342.3,1085.4 341.8,1089.5 339.5,1092.2C337.1,1095.0 335.4,1094.1 331.8,1091.1C328.2,1088.1 326.5,1086.1 324.1,1079.4C321.7,1072.8 320.0,1068.5 321.5,1062.5Z" fill="#e4e7ea"/>
<path d="M363.8,1120.1C363.5,1117.2 363.2,1117.3 359.9,1115.6C356.7,1113.8 354.5,1113.6 349.7,1112.7C344.9,1111.9 343.6,1112.5 339.5,1111.8C335.3,1111.1 335.4,1110.1 331.8,1109.9C328.2,1109.6 326.8,1111.5 324.1,1110.8C321.4,1110.1 320.9,1104.7 320.3,1106.9C319.7,1109.1 319.2,1115.4 321.5,1120.1C323.9,1124.8 325.7,1125.1 330.5,1127.1C335.3,1129.2 336.9,1128.4 342.0,1128.8C347.1,1129.2 347.8,1129.0 352.3,1128.8C356.7,1128.6 358.5,1130.0 361.2,1128.0C363.9,1125.9 364.1,1123.0 363.8,1120.1Z" fill="#e4e7ea"/>
<path d="M247.3,1148.4C247.3,1144.4 249.0,1141.5 251.1,1137.0C253.2,1132.4 252.7,1130.1 256.3,1128.8C259.8,1127.5 262.9,1129.0 266.5,1131.3C270.1,1133.6 271.6,1135.6 271.6,1138.6C271.6,1141.5 268.6,1141.1 266.5,1143.9C264.4,1146.7 264.8,1148.2 262.7,1150.5C260.6,1152.9 260.2,1153.2 257.5,1154.1C254.9,1154.9 253.5,1155.4 251.1,1154.1C248.8,1152.7 247.3,1152.4 247.3,1148.4Z" fill="#e4e7ea"/>
<path d="M265.2,1153.4C265.2,1150.0 265.4,1146.6 267.8,1143.2C270.2,1139.7 271.3,1139.1 275.5,1138.6C279.6,1138.0 281.5,1141.3 285.7,1140.9C289.9,1140.5 290.4,1137.0 293.4,1137.0C296.4,1137.0 297.6,1138.7 298.5,1140.9C299.4,1143.0 295.4,1144.1 297.2,1146.2C299.0,1148.2 303.8,1146.4 306.2,1149.8C308.6,1153.2 308.4,1157.2 307.5,1160.9C306.6,1164.5 302.3,1163.6 302.3,1165.4C302.3,1167.2 307.8,1167.3 307.5,1168.6C307.2,1169.9 304.9,1170.7 301.1,1171.1C297.2,1171.5 295.6,1170.3 290.8,1170.5C286.0,1170.6 285.1,1172.4 280.6,1171.7C276.1,1171.0 274.9,1169.4 271.6,1167.4C268.3,1165.3 265.9,1164.7 266.5,1162.8C267.1,1161.0 273.9,1160.8 274.2,1159.5C274.5,1158.3 269.9,1158.9 267.8,1157.5C265.7,1156.1 265.2,1156.7 265.2,1153.4Z" fill="#e4e7ea"/>
<path d="M306.2,1148.4C306.2,1144.4 307.3,1139.4 310.0,1136.2C312.7,1133.0 315.6,1133.1 317.7,1134.6C319.8,1136.0 318.4,1139.2 319.0,1142.4C319.6,1145.6 321.2,1145.6 320.3,1148.4C319.4,1151.1 317.5,1152.9 315.1,1154.1C312.8,1155.2 312.1,1154.7 310.0,1153.4C307.9,1152.0 306.2,1152.4 306.2,1148.4Z" fill="#e4e7ea"/>
<path d="M322.8,1146.9C322.5,1143.9 321.6,1139.8 322.8,1136.2C324.0,1132.6 325.0,1131.9 327.9,1131.3C330.9,1130.8 333.7,1131.4 335.6,1133.8C337.5,1136.2 337.0,1138.6 336.1,1141.7C335.2,1144.7 333.1,1144.5 331.8,1146.9C330.5,1149.3 330.5,1149.2 330.5,1152.0C330.5,1154.7 331.4,1156.2 331.8,1158.9C332.2,1161.6 332.9,1161.7 332.3,1163.5C331.7,1165.3 330.8,1166.0 329.2,1166.7C327.6,1167.5 327.3,1167.8 325.4,1166.7C323.5,1165.7 322.1,1165.1 321.0,1162.2C320.0,1159.2 320.1,1157.1 320.8,1154.1C321.5,1151.0 323.6,1150.8 324.1,1149.1C324.6,1147.4 323.1,1149.9 322.8,1146.9Z" fill="#e4e7ea"/>
<path d="M266.5,1122.8C265.3,1119.0 267.1,1113.8 270.3,1110.8C273.6,1107.8 276.7,1110.5 280.6,1109.9C284.5,1109.2 283.4,1107.0 287.0,1107.9C290.6,1108.8 293.6,1110.4 295.9,1113.7C298.3,1117.0 298.4,1119.2 297.2,1121.9C296.0,1124.6 294.1,1124.6 290.8,1125.4C287.5,1126.2 286.7,1125.0 283.1,1125.4C279.6,1125.8 279.3,1127.7 275.5,1127.1C271.6,1126.5 267.7,1126.6 266.5,1122.8Z" fill="#e4e7ea"/>
<path d="M299.8,1121.9C298.3,1118.9 299.7,1115.1 302.3,1111.8C305.0,1108.5 307.7,1107.5 311.3,1107.9C314.9,1108.3 316.5,1110.2 317.7,1113.7C318.9,1117.2 318.5,1120.3 316.4,1122.8C314.3,1125.3 312.6,1124.8 308.7,1124.5C304.9,1124.3 301.3,1124.9 299.8,1121.9Z" fill="#e4e7ea"/>
<path d="M320.3,1123.7C320.6,1121.6 321.0,1119.6 322.8,1119.2C324.6,1118.8 327.0,1119.9 327.9,1121.9C328.8,1124.0 328.2,1126.6 326.7,1128.0C325.2,1129.4 323.0,1129.0 321.5,1128.0C320.0,1127.0 320.0,1125.7 320.3,1123.7Z" fill="#e4e7ea"/>
<path d="M252.4,1113.7C252.7,1110.5 254.0,1106.7 257.5,1103.9C261.1,1101.1 264.5,1100.5 267.8,1101.9C271.1,1103.3 272.2,1106.4 271.6,1109.9C271.0,1113.3 268.8,1114.7 265.2,1116.5C261.6,1118.2 259.2,1118.1 256.3,1117.4C253.3,1116.8 252.1,1116.8 252.4,1113.7Z" fill="#e4e7ea"/>
<path d="M278.0,1099.8C276.8,1097.8 278.5,1093.7 280.6,1092.2C282.7,1090.7 285.8,1091.3 287.0,1093.3C288.2,1095.3 287.8,1099.3 285.7,1100.8C283.6,1102.3 279.2,1101.8 278.0,1099.8Z" fill="#e4e7ea"/>
<path d="M278.0,1091.1C277.1,1089.5 278.5,1086.2 280.6,1085.4C282.7,1084.6 286.1,1086.1 287.0,1087.7C287.9,1089.3 286.5,1091.4 284.4,1092.2C282.3,1093.0 278.9,1092.7 278.0,1091.1Z" fill="#e4e7ea"/>
<path d="M298.5,1090.0C299.4,1086.0 300.3,1080.8 303.6,1079.4C306.9,1078.1 310.2,1080.5 312.6,1084.2C315.0,1088.0 315.4,1092.1 313.9,1095.5C312.4,1098.9 309.5,1098.5 306.2,1098.7C302.9,1099.0 301.6,1098.6 299.8,1096.6C298.0,1094.6 297.6,1094.0 298.5,1090.0Z" fill="#e4e7ea"/>
<path d="M316.4,1086.6C317.3,1084.5 318.8,1083.8 320.3,1085.4C321.8,1087.0 323.1,1090.5 322.8,1093.3C322.5,1096.2 320.5,1097.4 319.0,1097.7C317.5,1097.9 317.0,1097.0 316.4,1094.4C315.8,1091.9 315.5,1088.7 316.4,1086.6Z" fill="#e4e7ea"/>
<path d="M344.6,1190.1C344.9,1188.2 346.3,1186.8 348.4,1186.3C350.5,1185.8 351.2,1186.0 353.5,1187.9C355.9,1189.8 356.9,1191.9 358.7,1194.3C360.5,1196.8 362.1,1197.3 361.2,1198.4C360.3,1199.6 357.8,1198.9 354.8,1199.5C351.8,1200.0 350.8,1201.2 348.4,1201.0C346.0,1200.7 344.9,1200.0 344.6,1198.4C344.3,1196.9 347.1,1196.3 347.1,1194.3C347.1,1192.4 344.3,1192.0 344.6,1190.1Z" fill="#e4e7ea"/>
<path d="M370.2,1179.5C369.9,1178.4 371.2,1176.8 372.7,1176.5C374.2,1176.3 376.3,1177.2 376.6,1178.3C376.9,1179.4 375.5,1180.9 374.0,1181.2C372.5,1181.5 370.5,1180.6 370.2,1179.5Z" fill="#e4e7ea"/>
<path d="M312.6,1168.0C312.3,1166.2 314.3,1164.1 316.4,1163.5C318.5,1162.9 320.0,1163.8 321.5,1165.4C323.0,1167.1 323.7,1169.2 322.8,1170.5C321.9,1171.8 320.1,1171.7 317.7,1171.1C315.3,1170.5 312.9,1169.8 312.6,1168.0Z" fill="#e4e7ea"/>
<path d="M415.2,1263.1C415.2,1261.6 417.4,1259.7 418.8,1257.3C420.3,1254.9 420.2,1254.4 421.4,1252.8C422.6,1251.1 423.0,1250.6 423.9,1250.2C424.8,1249.9 425.5,1250.1 425.2,1251.3C424.9,1252.6 422.7,1254.4 422.7,1255.6C422.7,1256.7 423.4,1255.7 425.2,1256.3C427.0,1256.8 428.8,1256.7 430.3,1258.0C431.8,1259.3 431.1,1260.3 431.6,1261.8C432.1,1263.3 432.7,1263.3 432.4,1264.4C432.1,1265.6 431.7,1266.4 430.3,1266.7C429.0,1267.1 428.0,1266.8 426.5,1266.1C425.0,1265.4 425.7,1264.3 423.9,1263.8C422.1,1263.2 420.9,1263.9 418.8,1263.8C416.8,1263.6 415.2,1264.6 415.2,1263.1Z" fill="#e4e7ea"/>
<path d="M389.9,1261.4C390.7,1260.4 391.5,1260.7 393.2,1260.1C394.9,1259.4 394.8,1258.9 397.1,1258.7C399.3,1258.5 401.5,1258.7 402.7,1259.4C403.9,1260.1 403.2,1261.0 402.2,1261.8C401.2,1262.5 398.6,1261.8 398.3,1262.4C398.0,1263.1 400.2,1263.3 400.9,1264.4C401.6,1265.6 400.8,1266.3 401.4,1267.4C402.0,1268.5 402.9,1268.6 403.5,1269.0C404.1,1269.5 404.3,1269.0 404.0,1269.3C403.7,1269.7 403.5,1270.1 402.2,1270.6C400.9,1271.2 399.8,1271.2 398.3,1271.6C396.8,1272.0 396.4,1272.0 395.8,1272.2C395.2,1272.5 396.3,1273.1 395.8,1272.6C395.3,1272.0 394.2,1271.7 393.7,1270.0C393.3,1268.3 394.0,1266.7 393.7,1265.4C393.4,1264.2 393.3,1264.9 392.5,1264.6C391.6,1264.3 390.5,1265.0 389.9,1264.3C389.3,1263.5 389.1,1262.4 389.9,1261.4Z" fill="#e4e7ea"/>
<path d="M404.0,1269.3C405.5,1269.0 406.9,1270.2 408.6,1269.3C410.3,1268.5 409.9,1266.1 411.1,1265.8C412.3,1265.5 413.3,1267.0 413.7,1268.1C414.1,1269.1 413.8,1269.5 412.9,1270.3C412.0,1271.1 411.8,1270.9 409.9,1271.6C407.9,1272.3 406.8,1272.4 404.7,1273.5C402.6,1274.6 402.2,1275.4 400.9,1276.3C399.6,1277.2 400.0,1277.3 399.4,1277.3C398.7,1277.2 397.7,1277.2 398.1,1276.0C398.4,1274.8 399.9,1273.4 400.9,1272.2C401.9,1271.1 401.5,1271.6 402.2,1271.0C402.9,1270.3 402.5,1269.7 404.0,1269.3Z" fill="#e4e7ea"/>
<path d="M552.2,1299.5C552.7,1298.9 552.0,1298.9 553.7,1299.2C555.5,1299.5 557.6,1300.3 559.6,1300.9C561.6,1301.4 560.7,1301.7 562.2,1301.4C563.6,1301.1 563.7,1300.7 565.8,1299.8C567.9,1298.8 569.0,1298.2 571.1,1297.5C573.3,1296.8 572.9,1296.9 575.0,1296.7C577.1,1296.5 577.7,1296.8 580.1,1296.7C582.5,1296.6 582.8,1296.4 585.2,1296.1C587.6,1295.9 588.7,1295.8 590.3,1295.6C592.0,1295.4 591.6,1295.1 592.4,1295.3C593.2,1295.5 593.0,1296.2 593.7,1296.4C594.4,1296.6 595.3,1295.8 595.5,1296.1C595.6,1296.4 594.6,1296.8 594.4,1297.8C594.3,1298.8 594.5,1299.1 594.7,1300.3C594.9,1301.5 595.9,1302.1 595.5,1303.1C595.0,1304.0 593.0,1303.8 592.9,1304.4C592.8,1305.0 594.1,1304.9 594.9,1305.5C595.8,1306.1 595.3,1306.4 596.7,1306.8C598.2,1307.3 598.9,1306.9 601.1,1307.4C603.3,1307.8 604.5,1307.7 606.2,1308.7C607.9,1309.7 606.6,1310.5 608.3,1311.6C609.9,1312.8 611.6,1313.1 613.4,1313.7C615.2,1314.3 614.7,1314.5 615.9,1314.2C617.1,1313.9 617.9,1313.5 618.5,1312.4C619.1,1311.3 617.6,1310.7 618.5,1309.5C619.4,1308.3 620.5,1307.7 622.3,1307.4C624.1,1307.1 624.7,1307.6 626.2,1308.2C627.7,1308.7 627.5,1309.2 628.7,1309.8C629.9,1310.4 629.5,1310.4 631.3,1310.8C633.1,1311.3 634.0,1311.2 636.4,1311.6C638.8,1312.1 639.7,1312.6 641.5,1312.7C643.3,1312.7 642.9,1312.3 644.1,1311.9C645.3,1311.5 645.3,1311.2 646.7,1311.1C648.0,1311.0 648.1,1311.5 650.0,1311.6C651.9,1311.7 653.3,1310.5 654.9,1311.6C656.4,1312.7 656.6,1314.2 656.6,1316.3C656.7,1318.4 655.9,1320.1 655.1,1320.7C654.3,1321.3 654.1,1320.1 653.1,1318.9C652.0,1317.6 651.2,1315.6 650.8,1315.3C650.3,1315.0 650.5,1316.5 651.0,1317.6C651.5,1318.7 652.4,1319.1 653.1,1320.2C653.7,1321.2 653.2,1320.7 653.8,1322.2C654.4,1323.7 654.6,1324.6 655.6,1326.5C656.6,1328.3 657.5,1328.7 658.2,1330.2C658.9,1331.6 657.9,1331.5 658.7,1332.6C659.5,1333.8 660.9,1333.9 661.8,1335.1C662.7,1336.2 662.4,1336.1 662.5,1337.5C662.7,1338.8 662.4,1339.6 662.5,1340.8C662.7,1342.1 662.5,1342.1 663.3,1343.0C664.1,1343.9 664.7,1342.9 665.9,1344.6C667.1,1346.3 666.9,1348.5 668.4,1350.3C669.9,1352.1 670.5,1351.1 672.3,1352.4C674.0,1353.7 674.5,1354.7 675.8,1355.8C677.2,1357.0 677.7,1356.6 678.1,1357.5C678.6,1358.3 677.5,1358.9 677.6,1359.5C677.8,1360.1 677.5,1359.4 678.7,1360.0C679.8,1360.6 680.4,1362.1 682.5,1362.3C684.6,1362.4 685.2,1361.2 687.6,1360.7C690.0,1360.2 690.3,1360.6 692.7,1360.2C695.2,1359.8 696.9,1358.4 698.1,1358.8C699.4,1359.3 698.5,1360.7 698.1,1362.3C697.8,1363.8 697.5,1363.9 696.6,1365.5C695.6,1367.0 695.2,1367.0 694.0,1368.9C692.8,1370.7 693.0,1371.5 691.5,1373.4C690.0,1375.4 689.5,1375.4 687.6,1377.2C685.7,1379.1 685.4,1379.6 683.3,1381.3C681.2,1383.0 680.6,1383.2 678.7,1384.7C676.7,1386.1 676.3,1386.3 674.8,1387.6C673.3,1388.9 673.6,1388.6 672.3,1390.3C670.9,1392.0 670.1,1393.0 668.9,1394.8C667.7,1396.6 667.4,1396.7 667.1,1398.2C666.9,1399.7 667.6,1399.5 667.9,1401.1C668.2,1402.7 668.0,1403.3 668.4,1405.0C668.8,1406.7 669.1,1407.1 669.7,1408.4C670.3,1409.7 670.6,1409.1 671.0,1410.7C671.3,1412.3 671.1,1413.2 671.2,1415.3C671.4,1417.3 672.4,1417.6 671.7,1419.5C671.1,1421.4 670.4,1421.8 668.4,1423.4C666.4,1425.0 665.1,1425.0 663.3,1426.3C661.5,1427.5 662.3,1427.7 660.7,1428.9C659.2,1430.0 657.4,1430.0 656.6,1431.2C655.9,1432.5 657.1,1432.6 657.4,1434.1C657.8,1435.6 658.1,1436.0 658.2,1437.8C658.3,1439.5 658.8,1440.0 657.9,1441.4C657.0,1442.9 656.0,1442.7 654.3,1443.9C652.7,1445.1 651.4,1445.3 650.8,1446.4C650.1,1447.5 651.6,1447.0 651.5,1448.5C651.5,1450.0 651.6,1450.9 650.5,1452.7C649.4,1454.5 648.2,1454.6 646.7,1456.3C645.2,1458.0 645.6,1458.2 644.1,1460.0C642.6,1461.8 641.5,1462.9 640.3,1464.0C639.0,1465.0 640.5,1463.7 638.7,1464.5C637.0,1465.2 635.5,1466.6 632.8,1467.2C630.2,1467.8 629.6,1467.1 627.5,1467.2C625.3,1467.3 625.7,1467.2 623.6,1467.7C621.5,1468.2 620.7,1469.3 618.5,1469.4C616.3,1469.4 615.5,1469.3 614.4,1468.0C613.3,1466.7 614.0,1465.7 613.9,1464.0C613.8,1462.2 614.7,1462.2 614.1,1460.5C613.6,1458.8 612.7,1458.3 611.6,1456.6C610.5,1454.8 610.7,1454.8 609.5,1453.0C608.3,1451.2 607.4,1451.0 606.5,1448.9C605.6,1446.8 606.2,1446.2 605.7,1443.9C605.2,1441.6 605.3,1441.3 604.4,1439.0C603.5,1436.7 603.1,1436.4 601.9,1434.1C600.7,1431.9 600.3,1431.4 599.3,1429.3C598.3,1427.3 597.8,1427.2 597.5,1425.3C597.2,1423.4 597.6,1422.9 598.0,1421.1C598.4,1419.3 598.5,1419.2 599.3,1417.6C600.1,1416.0 600.8,1416.0 601.6,1414.4C602.4,1412.8 602.7,1412.7 602.6,1410.7C602.5,1408.7 601.9,1407.8 601.1,1405.7C600.3,1403.5 599.9,1403.1 599.3,1401.6C598.7,1400.1 599.0,1400.5 598.5,1399.3C598.1,1398.2 598.2,1397.8 597.5,1396.6C596.8,1395.4 596.7,1395.6 595.5,1394.4C594.2,1393.1 593.2,1392.9 592.1,1391.4C591.1,1390.0 591.4,1389.0 590.9,1388.0C590.3,1387.1 589.5,1388.1 589.6,1387.4C589.7,1386.6 590.8,1386.1 591.4,1384.9C592.0,1383.7 591.9,1383.5 592.1,1382.4C592.4,1381.3 592.4,1381.5 592.4,1380.2C592.4,1378.9 592.7,1377.8 592.1,1376.8C591.6,1375.7 591.7,1375.9 590.1,1375.7C588.5,1375.5 587.0,1375.8 585.2,1375.9C583.5,1376.0 583.9,1376.7 582.7,1376.1C581.5,1375.5 581.7,1374.5 580.1,1373.4C578.5,1372.3 577.8,1371.8 576.0,1371.4C574.2,1371.0 573.7,1371.4 572.4,1371.6C571.1,1371.8 571.7,1371.6 570.4,1372.1C569.1,1372.5 568.7,1372.7 566.8,1373.4C564.9,1374.1 563.9,1374.8 562.2,1375.0C560.5,1375.2 560.8,1374.6 559.6,1374.3C558.4,1374.1 558.9,1373.8 557.1,1373.9C555.3,1374.0 554.0,1374.3 551.9,1374.8C549.8,1375.2 549.9,1375.9 548.1,1375.9C546.3,1375.8 546.2,1375.5 544.3,1374.5C542.3,1373.5 541.1,1372.6 539.7,1371.6C538.2,1370.6 538.9,1370.9 537.9,1370.2C536.8,1369.6 536.3,1369.7 535.3,1368.9C534.3,1368.0 534.2,1367.7 533.5,1366.6C532.8,1365.6 533.1,1365.5 532.2,1364.3C531.3,1363.2 530.6,1362.5 529.7,1361.6C528.8,1360.7 529.6,1361.4 528.4,1360.5C527.2,1359.5 525.5,1358.9 524.5,1357.7C523.6,1356.5 524.8,1356.6 524.3,1355.4C523.8,1354.1 522.3,1353.8 522.5,1352.4C522.7,1351.0 524.3,1350.9 525.1,1349.3C525.8,1347.8 525.3,1347.0 525.6,1345.8C525.9,1344.7 526.3,1345.5 526.3,1344.4C526.3,1343.3 526.2,1342.7 525.6,1341.1C525.0,1339.5 523.9,1339.2 523.8,1337.5C523.7,1335.8 524.5,1335.4 525.1,1333.8C525.7,1332.3 525.4,1332.3 526.3,1330.9C527.3,1329.5 528.3,1329.2 529.2,1327.7C530.1,1326.3 529.2,1326.3 530.2,1324.7C531.2,1323.1 532.6,1321.9 533.5,1320.9C534.5,1319.9 533.3,1320.9 534.3,1320.4C535.3,1319.9 536.2,1319.7 537.9,1318.9C539.5,1318.1 540.1,1318.0 541.2,1316.8C542.3,1315.7 542.5,1315.3 542.7,1314.0C543.0,1312.6 542.0,1312.4 542.2,1311.1C542.5,1309.8 542.4,1309.8 543.7,1308.4C545.1,1307.1 546.4,1306.4 547.8,1305.5C549.3,1304.6 549.1,1305.3 549.9,1304.4C550.7,1303.5 550.9,1302.8 551.4,1301.7C552.0,1300.5 551.7,1300.1 552.2,1299.5Z" fill="#e4e7ea"/>
<path d="M553.5,1298.6C552.3,1298.8 552.4,1298.2 551.2,1297.5C550.0,1296.8 550.0,1295.9 548.4,1295.6C546.7,1295.2 545.5,1297.1 544.3,1296.1C543.1,1295.1 543.2,1293.4 543.2,1291.3C543.3,1289.1 544.1,1288.6 544.5,1286.9C544.9,1285.2 545.0,1285.1 545.0,1283.9C545.0,1282.8 544.6,1282.5 544.5,1281.8C544.4,1281.2 544.8,1282.0 544.5,1281.2C544.3,1280.5 543.2,1279.4 543.5,1278.5C543.8,1277.6 544.4,1277.7 545.8,1277.3C547.2,1276.8 547.6,1276.8 549.4,1276.6C551.1,1276.5 551.3,1276.6 553.2,1276.6C555.1,1276.7 555.4,1276.8 557.6,1276.9C559.8,1277.1 561.2,1278.0 562.7,1277.3C564.2,1276.5 563.6,1275.5 564.0,1273.8C564.3,1272.1 564.2,1271.3 564.2,1270.0C564.3,1268.7 564.8,1269.5 564.2,1268.4C563.6,1267.2 563.0,1266.3 561.7,1265.1C560.3,1263.9 559.8,1264.1 558.3,1263.4C556.8,1262.8 556.0,1263.0 555.3,1262.4C554.5,1261.9 554.3,1261.7 555.0,1261.1C555.7,1260.4 556.4,1259.9 558.3,1259.7C560.3,1259.6 562.2,1261.1 563.2,1260.4C564.2,1259.7 562.4,1257.3 562.7,1256.6C563.0,1256.0 563.3,1257.5 564.5,1257.7C565.7,1257.8 566.3,1257.9 567.8,1257.3C569.4,1256.7 570.2,1256.4 571.1,1255.2C572.1,1254.1 570.9,1253.4 571.9,1252.4C572.9,1251.4 574.2,1251.9 575.5,1251.0C576.8,1250.0 576.6,1249.9 577.5,1248.4C578.4,1247.0 578.4,1245.9 579.3,1244.7C580.2,1243.6 579.9,1243.9 581.4,1243.6C582.9,1243.3 584.2,1243.9 585.7,1243.6C587.2,1243.3 586.8,1243.1 587.8,1242.5C588.7,1241.9 589.5,1242.1 589.8,1240.9C590.2,1239.8 589.7,1238.8 589.3,1237.5C589.0,1236.1 588.6,1236.6 588.3,1235.1C588.0,1233.6 587.9,1232.6 588.0,1231.1C588.2,1229.6 587.6,1229.8 589.1,1228.6C590.6,1227.5 593.3,1225.5 594.4,1226.1C595.6,1226.7 594.3,1229.0 593.9,1231.1C593.6,1233.2 593.5,1233.5 592.9,1235.1C592.3,1236.7 591.2,1236.9 591.4,1237.9C591.5,1238.9 592.5,1238.7 593.4,1239.4C594.3,1240.1 594.1,1240.8 595.2,1240.9C596.3,1241.1 596.5,1240.6 598.0,1240.2C599.6,1239.7 600.5,1238.8 601.9,1239.0C603.2,1239.3 602.2,1241.2 603.7,1241.3C605.1,1241.5 606.6,1240.5 608.3,1239.8C609.9,1239.1 609.3,1238.7 610.8,1238.2C612.3,1237.8 613.6,1237.6 614.7,1237.9C615.7,1238.1 614.5,1239.1 615.2,1239.4C615.8,1239.7 616.7,1239.7 617.5,1239.2C618.3,1238.8 617.7,1238.2 618.5,1237.5C619.3,1236.7 620.4,1236.6 621.1,1235.9C621.7,1235.2 621.3,1235.7 621.3,1234.3C621.3,1232.9 620.8,1231.6 621.1,1229.9C621.3,1228.1 621.4,1227.9 622.3,1227.0C623.3,1226.0 624.0,1225.4 625.2,1225.9C626.4,1226.4 626.6,1228.3 627.5,1229.0C628.4,1229.8 628.5,1230.0 629.0,1229.0C629.5,1228.1 629.5,1226.2 629.8,1224.8C630.0,1223.5 630.6,1223.8 630.0,1223.1C629.5,1222.4 628.1,1222.7 627.5,1221.8C626.9,1221.0 626.7,1220.5 627.5,1219.7C628.2,1218.8 629.0,1218.8 630.5,1218.3C632.0,1217.9 631.9,1217.9 633.9,1217.9C635.8,1217.9 636.5,1218.7 639.0,1218.3C641.5,1218.0 644.0,1217.3 644.6,1216.6C645.2,1215.8 642.4,1216.1 641.5,1215.2C640.6,1214.4 642.0,1213.2 640.8,1212.9C639.6,1212.6 638.6,1213.3 636.4,1213.8C634.2,1214.4 633.7,1214.5 631.3,1215.2C628.9,1215.9 627.9,1217.2 626.2,1217.0C624.5,1216.8 625.1,1215.6 624.1,1214.3C623.1,1213.0 622.2,1213.3 621.8,1211.5C621.4,1209.8 622.2,1209.2 622.3,1206.8C622.5,1204.5 621.4,1203.8 622.3,1201.5C623.2,1199.1 624.4,1198.9 626.2,1196.9C628.0,1194.9 628.6,1194.0 630.0,1192.8C631.5,1191.5 631.8,1192.7 632.3,1191.7C632.8,1190.7 632.8,1189.5 632.1,1188.5C631.3,1187.5 630.8,1187.5 629.0,1187.4C627.2,1187.2 625.9,1186.5 624.4,1187.9C622.8,1189.3 623.5,1190.9 622.3,1193.3C621.1,1195.6 621.1,1195.7 619.3,1197.9C617.5,1200.2 616.5,1201.3 614.7,1202.9C612.9,1204.6 612.4,1203.4 611.6,1204.9C610.8,1206.4 611.4,1207.3 611.3,1209.2C611.3,1211.1 610.4,1211.3 611.3,1212.9C612.2,1214.5 614.4,1214.6 615.2,1216.1C615.9,1217.6 615.7,1217.8 614.7,1219.2C613.6,1220.7 611.9,1220.8 610.8,1222.3C609.7,1223.8 610.4,1223.8 610.1,1225.7C609.7,1227.6 609.8,1228.6 609.3,1230.3C608.7,1231.9 609.0,1231.6 607.7,1232.7C606.5,1233.8 605.6,1234.5 603.9,1235.1C602.2,1235.7 601.5,1235.8 600.6,1235.1C599.6,1234.4 600.4,1233.9 599.8,1232.3C599.2,1230.7 598.5,1229.6 598.0,1228.2C597.5,1226.8 598.2,1227.3 597.8,1226.1C597.3,1224.9 596.4,1224.5 596.0,1223.1C595.5,1221.7 596.0,1221.6 595.7,1220.1C595.4,1218.6 595.1,1216.7 594.7,1216.6C594.3,1216.5 594.9,1218.5 594.2,1219.7C593.5,1220.8 593.1,1220.3 591.6,1221.4C590.1,1222.5 589.3,1223.6 587.8,1224.4C586.3,1225.2 586.6,1225.6 585.2,1224.8C583.8,1224.0 583.0,1222.5 581.9,1221.0C580.8,1219.5 580.9,1219.9 580.6,1218.3C580.4,1216.8 581.0,1215.9 580.9,1214.3C580.7,1212.7 580.3,1213.3 580.1,1211.5C579.9,1209.8 579.4,1208.5 580.1,1206.8C580.8,1205.2 581.7,1205.6 583.2,1204.4C584.7,1203.3 585.1,1203.1 586.5,1202.0C587.9,1200.8 587.7,1200.3 589.1,1199.5C590.4,1198.6 590.9,1199.6 592.1,1198.4C593.3,1197.3 593.1,1195.9 594.2,1194.3C595.3,1192.8 595.7,1193.1 596.7,1191.7C597.8,1190.3 597.8,1190.2 598.5,1188.5C599.3,1186.7 598.8,1186.3 600.1,1184.0C601.4,1181.8 602.8,1181.1 604.2,1178.9C605.5,1176.7 604.7,1176.9 605.7,1174.8C606.7,1172.6 605.9,1172.5 608.3,1169.9C610.6,1167.2 613.0,1165.6 615.9,1163.5C618.9,1161.4 618.4,1162.4 621.1,1160.9C623.7,1159.3 624.6,1158.3 627.5,1156.8C630.3,1155.4 630.7,1155.1 633.3,1154.8C636.0,1154.4 636.8,1154.8 639.0,1155.5C641.2,1156.1 641.0,1156.4 642.8,1157.5C644.6,1158.6 645.9,1158.8 646.7,1160.2C647.4,1161.6 645.0,1162.1 646.1,1163.5C647.3,1164.9 648.7,1165.2 651.8,1166.1C654.9,1167.0 656.2,1165.8 659.5,1167.4C662.7,1169.0 662.9,1170.1 665.9,1172.9C668.8,1175.8 671.1,1176.9 672.3,1179.5C673.5,1182.1 672.8,1182.6 671.0,1184.0C669.2,1185.5 667.9,1186.0 664.6,1185.7C661.3,1185.5 660.2,1184.2 656.9,1182.9C653.6,1181.6 650.8,1178.0 650.5,1180.1C650.2,1182.1 653.2,1187.8 655.6,1191.7C658.0,1195.6 658.6,1195.7 660.7,1196.9C662.8,1198.1 662.2,1197.6 664.6,1196.9C667.0,1196.2 669.8,1195.7 671.0,1193.8C672.2,1192.0 668.8,1191.4 669.7,1189.0C670.6,1186.6 672.4,1184.1 674.8,1183.5C677.2,1182.8 678.4,1186.9 679.9,1186.3C681.4,1185.6 681.5,1184.0 681.2,1180.6C680.9,1177.2 678.1,1173.8 678.7,1171.7C679.3,1169.6 682.3,1170.3 683.8,1171.7C685.3,1173.1 684.2,1175.5 685.1,1177.7C686.0,1179.9 686.1,1181.5 687.6,1181.2C689.1,1180.9 689.1,1178.8 691.5,1176.5C693.8,1174.3 694.9,1173.3 697.9,1171.7C700.8,1170.2 702.5,1169.6 704.3,1169.9C706.1,1170.1 703.4,1172.6 705.5,1172.9C707.6,1173.2 710.2,1172.1 713.2,1171.1C716.2,1170.1 716.2,1170.4 718.3,1168.6C720.4,1166.8 720.4,1164.5 722.2,1163.5C724.0,1162.5 723.6,1163.4 726.0,1164.2C728.4,1164.9 729.7,1165.7 732.4,1166.7C735.1,1167.8 736.0,1167.4 737.5,1168.6C739.0,1169.8 737.6,1170.7 738.8,1171.7C740.0,1172.7 742.4,1175.2 742.7,1172.9C743.0,1170.7 741.0,1166.3 740.1,1162.2C739.2,1158.1 738.2,1159.5 738.8,1155.5C739.4,1151.4 740.9,1148.1 742.7,1144.7C744.5,1141.3 744.1,1141.2 746.5,1140.9C748.9,1140.5 751.2,1140.6 752.9,1143.2C754.6,1145.8 753.7,1147.5 753.7,1152.0C753.7,1156.4 753.1,1157.6 752.9,1162.2C752.7,1166.8 752.3,1168.1 752.9,1171.7C753.5,1175.3 756.1,1175.0 755.5,1177.7C754.9,1180.5 750.3,1184.9 750.3,1183.5C750.3,1182.1 753.7,1176.7 755.5,1171.7C757.3,1166.8 757.7,1166.8 758.0,1162.2C758.3,1157.6 756.4,1156.0 756.7,1152.0C757.0,1147.9 757.5,1146.0 759.3,1144.7C761.1,1143.3 762.3,1145.3 764.4,1146.2C766.5,1147.0 766.2,1147.9 768.3,1148.4C770.4,1148.9 771.3,1147.5 773.4,1148.4C775.5,1149.2 775.7,1149.5 777.2,1152.0C778.7,1154.4 778.9,1159.2 779.8,1158.9C780.7,1158.5 782.3,1154.7 781.1,1150.5C779.9,1146.3 776.5,1144.0 774.7,1140.9C772.9,1137.7 771.6,1138.8 773.4,1137.0C775.2,1135.1 778.5,1135.9 782.3,1133.0C786.2,1130.1 786.4,1127.8 790.0,1124.5C793.6,1121.3 792.9,1121.3 797.7,1119.2C802.5,1117.1 804.5,1117.5 810.5,1115.6C816.5,1113.6 817.7,1114.8 823.3,1110.8C828.9,1106.9 830.1,1099.9 834.3,1098.7C838.5,1097.6 837.2,1103.6 841.2,1105.9C845.2,1108.3 847.6,1106.6 851.5,1108.9C855.3,1111.1 857.3,1110.9 857.9,1115.6C858.5,1120.2 856.7,1124.8 854.0,1128.8C851.3,1132.9 846.3,1131.6 846.3,1133.0C846.3,1134.3 851.0,1133.8 854.0,1134.6C857.0,1135.3 854.7,1134.7 859.1,1136.2C863.6,1137.7 867.8,1140.7 873.2,1140.9C878.6,1141.1 878.0,1138.1 882.2,1137.0C886.4,1135.9 887.6,1135.1 891.1,1136.2C894.7,1137.3 895.7,1138.5 897.5,1141.7C899.3,1144.8 897.6,1146.6 898.8,1149.8C900.0,1153.0 900.6,1155.0 902.7,1155.5C904.8,1156.0 904.8,1152.9 907.8,1152.0C910.8,1151.0 911.9,1151.2 915.5,1151.2C919.0,1151.2 920.8,1153.5 923.1,1152.0C925.5,1150.4 923.9,1146.7 925.7,1144.7C927.5,1142.6 928.4,1143.3 930.8,1143.2C933.2,1143.0 933.0,1143.2 935.9,1143.9C938.9,1144.6 940.0,1144.3 943.6,1146.2C947.2,1148.0 948.0,1149.6 951.3,1152.0C954.6,1154.3 954.4,1155.3 957.7,1156.1C961.0,1157.0 961.5,1155.0 965.4,1155.5C969.3,1155.9 971.1,1156.0 974.3,1158.2C977.6,1160.4 975.9,1163.3 979.5,1164.8C983.0,1166.3 984.3,1165.4 989.7,1164.8C995.1,1164.2 997.7,1162.6 1002.5,1162.2C1007.3,1161.7 1006.6,1162.4 1010.2,1162.8C1013.8,1163.3 1014.3,1162.8 1017.9,1164.2C1021.4,1165.5 1023.2,1167.4 1025.5,1168.6C1027.9,1169.8 1025.7,1168.2 1028.1,1169.2C1030.5,1170.2 1032.5,1170.3 1035.8,1172.9C1039.1,1175.6 1039.2,1178.2 1042.2,1180.6C1045.2,1183.1 1045.7,1182.3 1048.6,1183.5C1051.4,1184.7 1053.6,1183.8 1054.5,1185.7C1055.4,1187.6 1054.1,1189.6 1052.4,1191.7C1050.7,1193.8 1050.0,1194.6 1047.3,1194.9C1044.6,1195.1 1044.8,1194.1 1040.9,1192.8C1037.0,1191.4 1033.9,1189.0 1030.7,1189.0C1027.4,1189.0 1028.9,1191.8 1026.8,1192.8C1024.7,1193.8 1022.3,1191.7 1021.7,1193.3C1021.1,1194.8 1023.2,1196.9 1024.3,1199.5C1025.3,1202.1 1027.2,1203.0 1026.3,1204.4C1025.4,1205.8 1023.3,1204.6 1020.4,1205.4C1017.6,1206.2 1017.0,1206.3 1014.0,1207.8C1011.0,1209.2 1010.1,1209.6 1007.6,1211.5C1005.1,1213.5 1006.3,1215.4 1003.3,1216.1C1000.3,1216.9 997.4,1214.5 994.8,1214.8C992.3,1215.0 993.8,1216.6 992.3,1217.0C990.8,1217.4 990.0,1215.2 988.4,1216.6C986.8,1217.9 986.7,1220.6 985.3,1222.7C984.0,1224.8 982.7,1223.9 982.5,1225.7C982.4,1227.5 984.0,1228.5 984.6,1230.3C985.2,1232.0 985.7,1231.3 985.1,1233.1C984.5,1234.9 983.9,1235.3 982.0,1237.9C980.1,1240.4 978.9,1242.4 976.9,1244.0C974.9,1245.6 974.6,1243.7 973.6,1244.7C972.5,1245.8 973.5,1246.6 972.3,1248.4C971.1,1250.2 969.8,1252.4 968.5,1252.4C967.1,1252.4 967.3,1251.1 966.7,1248.4C966.0,1245.8 965.8,1244.5 965.6,1240.9C965.5,1237.4 965.2,1236.4 965.9,1233.1C966.6,1229.8 967.0,1229.1 968.7,1227.0C970.4,1224.8 971.1,1226.0 973.1,1224.0C975.0,1222.0 975.1,1220.7 976.9,1218.3C978.7,1216.0 978.6,1216.0 980.7,1213.8C982.8,1211.7 984.1,1211.4 985.9,1209.2C987.7,1207.0 989.0,1204.7 988.4,1204.4C987.8,1204.1 986.0,1206.9 983.3,1207.8C980.6,1208.7 980.2,1207.9 976.9,1208.3C973.6,1208.6 971.9,1207.4 969.2,1209.2C966.5,1211.0 966.9,1214.0 965.4,1216.1C963.9,1218.2 965.6,1217.8 962.8,1218.3C960.0,1218.9 956.6,1218.4 953.3,1218.3C950.1,1218.2 951.6,1217.7 948.7,1217.9C945.9,1218.1 944.6,1218.9 941.1,1219.2C937.5,1219.5 936.4,1218.4 933.4,1219.2C930.4,1220.0 930.6,1220.6 928.3,1222.7C925.9,1224.8 925.2,1225.6 923.1,1228.2C921.0,1230.8 921.4,1231.6 919.3,1233.9C917.2,1236.3 914.5,1236.6 914.2,1238.2C913.9,1239.9 916.2,1240.1 918.0,1240.9C919.8,1241.8 920.1,1241.7 921.9,1241.7C923.7,1241.7 924.0,1240.4 925.7,1240.9C927.4,1241.5 928.7,1242.2 929.0,1244.0C929.3,1245.7 926.9,1246.5 927.0,1248.4C927.0,1250.3 929.3,1250.0 929.3,1252.0C929.3,1254.1 927.6,1255.3 927.0,1257.3C926.3,1259.3 927.4,1258.8 926.5,1260.7C925.6,1262.7 924.5,1263.8 923.1,1265.8C921.8,1267.7 922.1,1267.4 920.6,1269.0C919.1,1270.7 918.5,1271.0 916.7,1272.9C914.9,1274.7 915.0,1275.5 912.9,1276.9C910.8,1278.4 909.6,1278.8 907.8,1279.1C906.0,1279.4 906.6,1277.8 905.2,1278.2C903.8,1278.5 903.3,1279.5 901.9,1280.6C900.5,1281.8 899.9,1282.0 899.3,1283.0C898.7,1284.1 900.3,1284.1 899.3,1285.1C898.3,1286.2 896.3,1286.5 895.0,1287.5C893.7,1288.5 893.5,1288.6 893.7,1289.5C893.9,1290.5 894.9,1290.0 896.0,1291.6C897.1,1293.1 897.9,1294.3 898.6,1296.1C899.2,1298.0 899.0,1298.2 898.8,1299.5C898.6,1300.7 898.7,1300.8 897.8,1301.4C896.9,1302.0 896.5,1301.5 895.0,1302.0C893.4,1302.4 892.2,1303.7 891.1,1303.3C890.1,1302.9 890.6,1301.9 890.6,1300.3C890.7,1298.8 891.2,1298.0 891.4,1296.7C891.6,1295.4 892.4,1295.4 891.4,1294.7C890.4,1294.0 888.1,1294.7 887.3,1293.9C886.5,1293.1 888.2,1292.5 888.1,1291.3C887.9,1290.1 887.1,1289.5 886.5,1288.7C885.9,1287.9 886.8,1287.6 885.5,1287.8C884.2,1288.0 882.5,1288.9 880.9,1289.5C879.3,1290.2 879.2,1291.0 878.6,1290.7C878.0,1290.4 878.1,1289.2 878.3,1288.1C878.6,1286.9 879.9,1286.5 879.6,1285.7C879.3,1285.0 878.4,1284.4 877.1,1284.8C875.7,1285.3 875.9,1286.5 874.0,1287.8C872.1,1289.1 869.6,1289.1 868.9,1290.4C868.1,1291.7 869.9,1292.2 870.7,1293.3C871.4,1294.4 870.4,1295.0 871.9,1295.3C873.4,1295.5 875.0,1294.5 877.1,1294.4C879.2,1294.4 880.3,1294.5 880.9,1295.0C881.5,1295.5 880.9,1295.6 879.6,1296.4C878.4,1297.3 877.1,1297.4 875.5,1298.6C873.9,1299.9 872.8,1300.3 872.7,1301.7C872.6,1303.0 874.3,1302.8 875.3,1304.4C876.3,1306.0 876.2,1306.8 877.1,1308.4C878.0,1310.1 879.4,1310.3 879.1,1311.6C878.8,1313.0 875.8,1313.3 875.8,1314.2C875.8,1315.2 878.5,1314.5 879.1,1315.5C879.8,1316.6 879.2,1317.7 878.6,1318.9C878.0,1320.1 877.5,1319.5 876.5,1320.7C875.6,1321.9 875.2,1322.9 874.5,1324.0C873.8,1325.0 874.2,1324.3 873.5,1325.2C872.8,1326.1 872.3,1327.0 871.4,1328.0C870.5,1328.9 870.7,1328.4 869.6,1329.2C868.6,1330.0 867.7,1330.8 866.8,1331.4C866.0,1332.0 867.2,1331.4 866.1,1331.9C864.9,1332.4 863.2,1332.8 861.7,1333.4C860.2,1333.9 860.8,1333.9 859.7,1334.3C858.5,1334.7 858.2,1334.6 856.6,1335.1C855.0,1335.5 854.3,1335.8 852.7,1336.3C851.2,1336.7 850.7,1336.3 849.9,1337.0C849.1,1337.7 849.8,1339.0 849.4,1339.2C849.0,1339.3 848.8,1338.2 848.1,1337.5C847.4,1336.7 847.4,1336.3 846.3,1336.0C845.3,1335.7 845.1,1335.8 843.8,1336.3C842.5,1336.7 842.0,1336.8 840.7,1338.0C839.4,1339.1 838.8,1340.0 838.1,1341.1C837.5,1342.2 837.5,1341.8 837.9,1342.7C838.3,1343.7 838.6,1344.0 839.7,1345.1C840.8,1346.3 841.4,1346.8 842.5,1347.7C843.6,1348.6 843.4,1347.9 844.3,1349.1C845.2,1350.3 845.7,1351.2 846.3,1352.8C847.0,1354.5 847.0,1354.9 847.1,1356.3C847.2,1357.8 847.3,1358.0 846.9,1359.1C846.4,1360.1 846.2,1360.2 845.1,1360.9C843.9,1361.7 843.2,1361.5 842.0,1362.3C840.8,1363.0 841.1,1363.2 839.9,1364.1C838.7,1365.0 837.9,1365.6 836.9,1366.2C835.9,1366.7 835.8,1367.0 835.6,1366.4C835.3,1365.8 836.0,1364.6 835.8,1363.7C835.7,1362.7 835.7,1362.7 834.8,1362.3C834.0,1361.9 833.2,1362.4 832.3,1361.8C831.4,1361.2 831.6,1360.6 831.0,1359.8C830.4,1359.0 830.9,1359.0 829.7,1358.4C828.5,1357.7 826.8,1357.7 825.9,1357.0C824.9,1356.3 825.9,1355.8 825.6,1355.4C825.3,1355.0 825.1,1355.1 824.6,1355.2C824.0,1355.2 823.7,1354.8 823.3,1355.6C822.9,1356.4 823.5,1357.3 823.0,1358.6C822.6,1360.0 821.9,1360.0 821.5,1361.4C821.1,1362.7 820.8,1363.1 821.3,1364.3C821.7,1365.6 822.5,1365.4 823.3,1366.6C824.1,1367.8 823.6,1368.6 824.6,1369.6C825.6,1370.5 826.7,1370.2 827.7,1370.7C828.6,1371.2 827.7,1370.8 828.7,1371.8C829.7,1372.8 831.2,1373.6 832.0,1375.0C832.8,1376.4 832.1,1376.7 832.3,1377.9C832.4,1379.1 832.1,1379.1 832.5,1380.2C832.9,1381.2 833.9,1381.8 834.1,1382.4C834.2,1383.1 833.5,1382.9 833.0,1382.9C832.6,1382.9 833.0,1383.0 832.0,1382.4C831.0,1381.9 830.2,1381.4 828.9,1380.6C827.7,1379.8 827.5,1379.9 826.6,1379.1C825.7,1378.2 825.7,1378.1 825.1,1376.8C824.5,1375.5 824.4,1374.9 824.1,1373.6C823.8,1372.4 824.2,1372.2 823.8,1371.4C823.4,1370.6 823.2,1371.1 822.3,1370.2C821.4,1369.4 820.8,1368.9 820.0,1367.8C819.1,1366.6 818.8,1366.7 818.7,1365.5C818.6,1364.3 819.5,1364.0 819.7,1362.5C819.9,1361.0 819.4,1360.5 819.5,1359.1C819.5,1357.6 820.2,1357.5 820.0,1356.3C819.7,1355.1 819.0,1355.2 818.4,1354.0C817.8,1352.8 817.7,1352.3 817.4,1351.0C817.1,1349.6 817.6,1349.1 817.2,1348.2C816.7,1347.2 816.1,1347.1 815.4,1347.0C814.6,1346.9 814.7,1347.3 813.8,1347.9C812.9,1348.6 812.7,1349.5 811.5,1349.8C810.3,1350.1 809.2,1350.3 808.7,1349.3C808.2,1348.4 809.2,1347.4 809.2,1345.8C809.2,1344.3 809.2,1344.0 808.7,1342.7C808.2,1341.5 807.8,1341.1 806.9,1340.4C806.1,1339.6 805.9,1340.1 805.1,1339.4C804.3,1338.7 804.1,1338.2 803.6,1337.5C803.1,1336.8 803.1,1337.2 802.8,1336.5C802.5,1335.8 802.7,1335.1 802.3,1334.3C801.9,1333.6 801.8,1333.2 801.0,1333.4C800.3,1333.5 800.1,1334.6 799.0,1335.1C797.9,1335.6 797.3,1335.4 796.4,1335.5C795.6,1335.7 796.2,1335.7 795.4,1335.8C794.6,1335.9 794.3,1335.5 793.1,1336.0C791.8,1336.6 790.9,1337.4 790.0,1338.2C789.1,1339.0 790.0,1338.9 789.3,1339.4C788.5,1339.9 788.0,1339.9 786.9,1340.4C785.9,1340.9 785.9,1340.8 784.9,1341.6C783.9,1342.3 783.9,1342.6 782.9,1343.5C781.8,1344.3 781.7,1344.4 780.5,1345.3C779.4,1346.3 779.4,1346.7 778.0,1347.7C776.6,1348.7 775.7,1349.0 774.4,1349.8C773.1,1350.6 772.8,1350.2 772.4,1351.2C771.9,1352.2 772.5,1352.9 772.6,1354.0C772.7,1355.1 772.9,1355.0 772.9,1356.1C772.9,1357.2 772.9,1357.5 772.6,1358.6C772.3,1359.7 771.8,1360.0 771.6,1360.9C771.4,1361.8 772.2,1362.0 771.8,1362.5C771.5,1363.0 770.5,1362.7 770.1,1363.2C769.6,1363.7 770.4,1364.2 769.8,1364.8C769.2,1365.4 768.4,1365.1 767.5,1365.7C766.5,1366.3 766.7,1367.6 765.7,1367.5C764.7,1367.5 763.9,1366.5 763.1,1365.5C762.4,1364.5 762.8,1364.5 762.4,1363.2C761.9,1361.9 761.9,1361.5 761.1,1360.0C760.3,1358.4 759.6,1358.2 758.8,1356.5C758.0,1354.9 758.4,1354.2 757.8,1352.8C757.2,1351.4 756.9,1351.9 756.2,1350.5C755.6,1349.1 755.5,1348.9 754.9,1347.0C754.4,1345.1 754.0,1344.1 753.7,1342.3C753.3,1340.4 753.5,1340.4 753.4,1339.2C753.3,1337.9 753.3,1338.1 753.2,1337.0C753.0,1335.9 753.2,1334.6 752.9,1334.6C752.6,1334.5 752.8,1336.0 751.9,1336.8C751.0,1337.5 750.3,1337.8 749.1,1338.0C747.8,1338.1 747.6,1338.2 746.5,1337.5C745.4,1336.8 745.0,1335.8 744.5,1335.1C743.9,1334.3 743.5,1334.7 743.9,1334.3C744.4,1334.0 745.7,1333.9 746.5,1333.6C747.3,1333.3 747.9,1333.1 747.3,1332.9C746.7,1332.6 745.2,1333.1 743.9,1332.6C742.7,1332.2 743.1,1331.9 741.9,1330.9C740.7,1329.9 739.8,1329.2 738.8,1328.2C737.8,1327.2 739.0,1326.9 737.5,1326.7C736.0,1326.5 734.9,1327.0 732.4,1327.2C729.9,1327.4 729.2,1327.5 726.8,1327.5C724.4,1327.4 724.2,1327.1 722.2,1327.0C720.2,1326.8 720.1,1326.9 718.3,1326.7C716.5,1326.5 715.5,1326.7 714.5,1326.0C713.5,1325.3 714.7,1324.5 714.0,1323.7C713.3,1322.9 712.8,1322.5 711.4,1322.4C710.1,1322.4 709.5,1323.2 708.1,1323.5C706.7,1323.7 707.0,1323.9 705.5,1323.5C704.0,1323.0 703.6,1322.7 701.7,1321.4C699.8,1320.1 698.8,1319.4 697.3,1317.9C695.9,1316.4 696.4,1315.9 695.3,1315.0C694.2,1314.2 693.6,1314.2 692.7,1314.2C691.8,1314.2 692.1,1314.5 691.5,1315.0C690.9,1315.6 690.2,1315.7 690.2,1316.6C690.2,1317.5 690.9,1317.8 691.5,1318.9C692.1,1320.0 691.8,1320.4 692.7,1321.4C693.6,1322.5 694.6,1322.4 695.3,1323.5C696.0,1324.5 695.3,1324.9 695.8,1326.0C696.3,1327.1 696.8,1328.4 697.3,1328.2C697.9,1328.0 697.9,1325.1 698.4,1325.0C698.8,1324.8 699.3,1326.7 699.4,1327.7C699.5,1328.7 698.1,1328.9 698.6,1329.4C699.2,1330.0 699.8,1330.0 701.7,1329.9C703.6,1329.8 704.9,1329.6 706.6,1328.9C708.2,1328.2 707.9,1327.8 708.9,1327.0C709.9,1326.1 710.3,1325.8 710.9,1325.2C711.6,1324.6 711.6,1323.9 711.7,1324.5C711.8,1325.0 711.3,1326.6 711.4,1327.7C711.5,1328.8 710.8,1328.4 712.2,1329.2C713.6,1330.0 715.4,1330.1 717.3,1331.2C719.2,1332.2 720.1,1332.4 720.4,1333.8C720.6,1335.3 719.4,1336.3 718.3,1337.5C717.3,1338.7 716.6,1337.8 715.8,1338.9C715.0,1340.0 715.9,1340.9 715.0,1342.3C714.1,1343.6 713.6,1343.5 711.9,1344.6C710.3,1345.7 709.5,1346.4 708.1,1347.0C706.7,1347.5 707.5,1346.6 705.8,1347.0C704.1,1347.4 702.2,1348.1 700.9,1348.9C699.7,1349.6 701.7,1349.5 700.4,1350.3C699.1,1351.0 697.0,1351.5 695.3,1352.1C693.6,1352.7 694.5,1352.3 693.0,1352.8C691.5,1353.4 691.3,1353.5 688.9,1354.5C686.5,1355.4 684.9,1356.2 682.5,1356.8C680.1,1357.4 679.7,1357.3 678.7,1357.0C677.6,1356.7 678.3,1356.8 677.9,1355.6C677.5,1354.5 677.2,1353.8 676.9,1352.1C676.5,1350.5 676.5,1349.8 676.4,1348.6C676.2,1347.5 676.8,1348.3 676.1,1347.2C675.4,1346.1 674.7,1345.5 673.5,1343.9C672.3,1342.3 672.4,1342.1 671.0,1340.4C669.5,1338.6 668.6,1338.1 667.4,1336.3C666.2,1334.5 666.5,1334.1 665.9,1332.6C665.2,1331.1 665.5,1331.4 664.6,1329.9C663.7,1328.5 662.9,1327.7 662.0,1326.5C661.1,1325.2 661.6,1325.9 660.7,1324.7C659.8,1323.5 659.2,1322.6 658.2,1321.4C657.2,1320.3 656.7,1321.1 656.4,1319.9C656.1,1318.7 656.8,1317.2 656.9,1316.3C657.0,1315.5 657.1,1317.4 656.6,1316.3C656.2,1315.2 654.9,1313.2 654.9,1311.6C654.8,1310.0 655.8,1310.4 656.3,1309.5C656.7,1308.6 656.5,1308.8 656.9,1307.6C657.3,1306.5 657.7,1306.1 658.2,1304.7C658.7,1303.3 658.8,1302.7 658.9,1301.7C659.1,1300.7 658.8,1301.1 658.9,1300.3C659.1,1299.5 659.2,1298.8 659.5,1298.1C659.7,1297.4 660.3,1297.4 660.0,1297.2C659.7,1297.0 659.1,1297.4 658.2,1297.2C657.2,1297.1 657.1,1296.4 655.9,1296.7C654.7,1297.0 654.1,1298.1 653.1,1298.6C652.0,1299.2 652.5,1299.2 651.3,1298.9C650.1,1298.6 649.2,1297.8 647.9,1297.2C646.7,1296.7 646.6,1296.2 645.9,1296.4C645.2,1296.6 645.8,1297.9 644.9,1298.1C643.9,1298.3 643.1,1297.5 641.8,1297.2C640.5,1297.0 640.6,1297.2 639.5,1297.0C638.4,1296.7 637.8,1296.9 637.2,1296.1C636.6,1295.3 637.2,1294.5 636.9,1293.6C636.6,1292.6 636.2,1293.1 635.9,1292.1C635.6,1291.2 636.1,1290.6 635.7,1289.5C635.2,1288.5 633.6,1288.3 634.1,1287.5C634.6,1286.7 635.9,1287.0 637.7,1286.3C639.5,1285.7 639.7,1285.2 641.8,1284.7C643.9,1284.2 644.6,1284.9 646.7,1284.2C648.7,1283.6 648.8,1282.5 650.5,1281.8C652.2,1281.2 652.3,1281.6 653.8,1281.5C655.4,1281.5 655.7,1281.0 657.2,1281.5C658.6,1282.0 658.5,1282.9 660.2,1283.6C662.0,1284.3 662.5,1284.3 664.6,1284.5C666.6,1284.8 666.8,1285.0 668.9,1284.5C671.1,1284.1 672.6,1283.8 673.8,1282.7C675.0,1281.7 674.4,1281.0 674.1,1280.0C673.7,1279.0 673.5,1279.3 672.3,1278.5C671.1,1277.7 670.4,1277.6 668.9,1276.6C667.4,1275.7 667.0,1275.3 665.9,1274.4C664.7,1273.6 665.2,1273.9 664.1,1273.2C662.9,1272.5 660.9,1272.6 661.0,1271.6C661.1,1270.6 663.9,1270.1 664.6,1269.0C665.2,1268.0 663.0,1268.0 663.8,1267.1C664.6,1266.2 668.0,1265.5 668.2,1265.1C668.3,1264.7 665.7,1265.4 664.6,1265.4C663.5,1265.5 664.3,1265.1 663.6,1265.4C662.8,1265.7 663.1,1266.0 661.5,1266.7C660.0,1267.5 657.1,1267.7 656.9,1268.7C656.7,1269.7 660.2,1270.1 660.5,1271.0C660.7,1271.8 659.2,1271.6 657.9,1272.2C656.7,1272.9 656.2,1273.4 655.1,1273.8C654.0,1274.2 654.1,1274.5 653.1,1273.8C652.0,1273.2 650.4,1272.2 650.5,1271.0C650.6,1269.8 653.5,1269.5 653.3,1268.7C653.1,1267.9 651.5,1267.7 649.7,1267.4C648.0,1267.1 647.4,1266.5 645.9,1267.4C644.4,1268.3 644.5,1269.6 643.3,1271.3C642.1,1273.0 641.8,1273.2 640.8,1274.8C639.7,1276.3 639.4,1276.6 638.7,1277.9C638.0,1279.1 637.6,1279.2 637.7,1280.0C637.8,1280.9 638.6,1280.9 639.0,1281.5C639.3,1282.2 638.7,1282.2 639.2,1282.7C639.8,1283.3 641.8,1283.5 641.4,1283.9C641.1,1284.4 639.3,1283.8 637.7,1284.5C636.1,1285.2 635.3,1286.8 634.4,1286.9C633.4,1287.0 634.7,1285.5 633.6,1285.0C632.5,1284.5 631.0,1284.3 629.8,1284.8C628.5,1285.4 628.8,1287.1 628.2,1287.5C627.6,1287.9 627.7,1287.0 627.2,1286.6C626.7,1286.2 626.4,1285.5 625.9,1285.7C625.4,1285.9 625.1,1286.6 625.2,1287.5C625.2,1288.4 625.8,1288.7 626.2,1289.5C626.6,1290.4 626.4,1290.5 626.9,1291.3C627.5,1292.0 628.3,1292.0 628.7,1292.7C629.2,1293.4 629.2,1293.9 628.7,1294.1C628.3,1294.3 627.3,1293.7 626.7,1293.6C626.1,1293.4 626.2,1293.2 626.2,1293.6C626.2,1294.0 626.7,1294.4 626.7,1295.3C626.7,1296.2 626.6,1297.0 626.2,1297.5C625.8,1298.1 625.7,1297.7 624.9,1297.5C624.1,1297.3 623.6,1297.5 622.9,1296.7C622.1,1295.8 621.8,1294.8 621.8,1293.9C621.8,1292.9 623.0,1293.1 622.9,1292.7C622.7,1292.3 621.9,1292.6 621.3,1292.1C620.8,1291.7 621.1,1291.5 620.5,1290.7C620.0,1289.9 619.5,1289.4 619.0,1288.7C618.5,1287.9 618.7,1288.0 618.2,1287.5C617.8,1287.0 617.3,1287.2 617.0,1286.3C616.7,1285.4 617.0,1284.7 617.0,1283.6C617.0,1282.6 617.5,1282.6 617.0,1281.8C616.4,1281.1 615.4,1280.8 614.7,1280.3C613.9,1279.8 614.9,1280.5 613.6,1279.7C612.4,1278.9 611.0,1278.1 609.3,1276.9C607.6,1275.8 607.3,1275.9 606.2,1274.8C605.1,1273.7 604.9,1273.0 604.4,1272.2C603.9,1271.4 604.5,1271.1 604.2,1271.3C603.8,1271.4 603.4,1273.0 602.9,1272.9C602.3,1272.7 601.9,1271.2 601.9,1270.6C601.8,1270.0 603.3,1270.2 602.6,1270.3C601.9,1270.4 599.7,1270.1 598.8,1271.0C597.9,1271.8 598.1,1272.5 598.8,1273.8C599.5,1275.1 600.7,1275.2 601.9,1276.6C603.0,1278.1 602.0,1278.8 603.7,1280.0C605.3,1281.2 607.7,1281.1 608.8,1281.8C609.8,1282.6 607.8,1282.8 608.3,1283.3C608.7,1283.9 609.4,1283.7 610.6,1284.2C611.8,1284.8 612.4,1285.0 613.4,1285.7C614.3,1286.4 614.4,1286.7 614.7,1287.2C614.9,1287.8 615.2,1288.4 614.4,1288.1C613.6,1287.8 612.4,1286.0 611.3,1286.0C610.3,1286.0 609.9,1287.1 609.8,1288.1C609.7,1289.1 611.1,1289.5 611.1,1290.4C611.1,1291.4 610.5,1291.4 609.8,1292.1C609.1,1292.9 608.8,1293.4 608.3,1293.6C607.7,1293.7 607.4,1293.5 607.5,1292.7C607.6,1292.0 608.7,1291.6 608.8,1290.4C608.8,1289.3 608.3,1288.5 607.7,1287.8C607.2,1287.1 607.1,1288.0 606.5,1287.5C605.9,1287.0 605.8,1286.3 605.2,1285.7C604.5,1285.2 604.7,1285.6 603.7,1285.1C602.6,1284.7 601.8,1284.6 600.6,1283.9C599.4,1283.2 599.7,1283.0 598.5,1282.1C597.4,1281.3 596.7,1281.2 595.7,1280.3C594.7,1279.5 594.7,1279.3 594.2,1278.5C593.7,1277.7 594.1,1277.7 593.7,1276.9C593.2,1276.2 593.2,1276.0 592.4,1275.4C591.6,1274.7 591.2,1274.1 590.1,1274.1C589.0,1274.2 588.7,1275.2 587.8,1275.7C586.8,1276.2 587.2,1275.7 586.0,1276.3C584.8,1276.9 583.9,1277.9 582.7,1278.2C581.5,1278.5 582.1,1277.9 580.9,1277.6C579.7,1277.3 578.9,1276.7 577.5,1276.9C576.2,1277.2 575.7,1277.7 575.2,1278.5C574.8,1279.3 576.0,1279.2 575.5,1280.3C575.0,1281.5 574.1,1282.4 572.9,1283.3C571.7,1284.3 571.3,1283.7 570.4,1284.2C569.5,1284.8 570.0,1284.6 569.1,1285.7C568.2,1286.8 566.8,1287.7 566.5,1289.0C566.2,1290.2 567.9,1290.2 567.8,1291.0C567.7,1291.8 566.7,1291.6 566.0,1292.4C565.4,1293.2 565.8,1293.5 565.0,1294.4C564.2,1295.4 563.3,1295.9 562.4,1296.4C561.5,1296.9 562.1,1296.6 561.2,1296.7C560.2,1296.8 559.5,1296.9 558.3,1297.0C557.1,1297.0 557.2,1296.6 556.0,1297.0C554.9,1297.4 554.6,1298.5 553.5,1298.6Z" fill="#e4e7ea"/>
<path d="M546.6,1239.0C546.6,1238.6 548.0,1237.0 548.6,1236.7C549.2,1236.4 550.9,1236.1 551.4,1236.3C552.0,1236.5 553.2,1238.1 553.2,1238.6C553.3,1239.2 552.5,1240.7 551.9,1240.9C551.4,1241.2 549.2,1240.8 548.6,1240.6C548.0,1240.3 546.6,1239.5 546.6,1239.0Z" fill="#e4e7ea" stroke="#e4e7ea" stroke-width="0.8"/>
<path d="M541.7,1249.9C542.8,1250.3 543.4,1250.4 545.5,1249.9C547.7,1249.4 549.5,1249.2 550.9,1247.7C552.3,1246.2 551.5,1245.2 551.7,1243.6C551.9,1242.0 552.4,1241.7 551.7,1240.9C551.0,1240.2 549.8,1241.0 548.6,1240.6C547.4,1240.1 546.6,1239.9 546.6,1239.0C546.6,1238.1 548.1,1237.4 548.6,1236.7C549.1,1236.0 549.2,1235.9 548.6,1235.9C548.0,1235.9 546.9,1236.0 546.1,1236.7C545.2,1237.3 546.0,1237.8 545.0,1238.6C544.0,1239.5 542.4,1239.1 541.7,1240.2C541.0,1241.3 541.7,1242.0 542.0,1243.2C542.3,1244.5 543.3,1244.3 543.0,1245.5C542.7,1246.6 541.0,1247.0 540.7,1248.1C540.4,1249.1 540.6,1249.5 541.7,1249.9Z" fill="#e4e7ea"/>
<path d="M937.7,1486.2C938.4,1485.1 940.2,1487.2 942.3,1487.4C944.5,1487.5 945.9,1486.0 946.9,1486.8C948.0,1487.5 947.2,1489.0 946.7,1490.7C946.2,1492.3 946.1,1492.7 944.9,1493.7C943.7,1494.7 942.9,1495.4 941.6,1495.0C940.3,1494.5 940.2,1493.9 939.3,1491.9C938.4,1489.8 937.0,1487.2 937.7,1486.2Z" fill="#e4e7ea"/>
<path d="M946.9,1398.2C947.5,1397.6 949.4,1397.7 951.3,1397.1C953.2,1396.4 953.8,1395.6 955.1,1395.3C956.5,1394.9 956.9,1394.8 957.2,1395.5C957.5,1396.2 957.5,1397.2 956.4,1398.2C955.3,1399.2 954.4,1399.4 952.6,1399.8C950.8,1400.1 950.1,1400.1 948.7,1399.8C947.4,1399.4 946.4,1398.8 946.9,1398.2Z" fill="#e4e7ea"/>
<path d="M953.3,1391.6C953.5,1391.5 956.4,1392.2 957.7,1393.2C959.0,1394.2 959.1,1395.8 959.0,1395.9C958.9,1396.1 958.5,1394.9 957.2,1393.9C955.9,1392.9 953.2,1391.8 953.3,1391.6Z" fill="#e4e7ea"/>
<path d="M962.8,1397.5C963.4,1397.6 965.5,1398.9 966.1,1399.8C966.8,1400.7 966.2,1401.5 965.6,1401.4C965.0,1401.2 964.2,1400.2 963.6,1399.3C962.9,1398.4 962.2,1397.4 962.8,1397.5Z" fill="#e4e7ea"/>
<path d="M974.3,1403.8C974.9,1403.4 977.9,1404.3 978.9,1405.2C980.0,1406.1 979.5,1407.3 978.9,1407.7C978.4,1408.1 977.5,1407.9 976.4,1407.0C975.3,1406.1 973.7,1404.3 974.3,1403.8Z" fill="#e4e7ea"/>
<path d="M1009.4,1468.3C1010.0,1468.1 1011.8,1469.4 1013.5,1470.7C1015.2,1472.1 1015.4,1472.6 1016.6,1474.1C1017.7,1475.6 1016.9,1476.5 1018.4,1477.2C1019.9,1477.9 1021.6,1477.1 1023.0,1477.2C1024.4,1477.2 1024.4,1476.4 1024.3,1477.5C1024.1,1478.5 1023.4,1480.6 1022.5,1481.8C1021.6,1483.0 1021.3,1481.4 1020.4,1482.6C1019.5,1483.9 1019.7,1485.6 1018.6,1487.1C1017.6,1488.5 1016.7,1488.7 1015.8,1488.9C1014.9,1489.0 1014.8,1488.6 1014.8,1487.7C1014.8,1486.7 1016.4,1485.9 1015.8,1484.7C1015.2,1483.5 1012.5,1483.7 1012.2,1482.3C1011.9,1481.0 1014.1,1480.6 1014.5,1478.9C1015.0,1477.2 1014.9,1476.7 1014.0,1474.9C1013.2,1473.1 1012.0,1472.8 1010.9,1471.3C1009.9,1469.7 1008.8,1468.4 1009.4,1468.3Z" fill="#e4e7ea"/>
<path d="M1009.4,1485.6C1010.7,1485.7 1012.5,1486.6 1013.3,1487.7C1014.0,1488.7 1013.5,1488.6 1012.7,1490.1C1012.0,1491.5 1010.9,1492.4 1010.2,1493.7C1009.5,1495.0 1010.7,1494.8 1009.7,1495.6C1008.7,1496.4 1007.0,1495.6 1005.8,1497.2C1004.6,1498.7 1005.6,1500.5 1004.5,1502.3C1003.5,1504.0 1002.7,1504.1 1001.2,1504.5C999.7,1505.0 999.9,1504.7 998.1,1504.2C996.4,1503.7 994.0,1504.0 993.5,1502.6C993.1,1501.1 994.6,1499.9 996.1,1498.1C997.6,1496.3 997.8,1496.5 999.9,1495.0C1002.0,1493.4 1003.3,1493.4 1005.1,1491.6C1006.9,1489.7 1006.6,1488.5 1007.6,1487.1C1008.6,1485.7 1008.1,1485.4 1009.4,1485.6Z" fill="#e4e7ea"/>
<path d="M811.3,1373.2C812.6,1373.1 814.7,1373.1 816.9,1374.1C819.1,1375.0 818.9,1375.7 820.7,1377.2C822.5,1378.8 822.2,1379.3 824.6,1380.9C827.0,1382.4 829.0,1382.3 831.0,1384.0C833.0,1385.7 831.8,1386.4 833.0,1388.0C834.2,1389.7 834.8,1389.8 836.1,1391.0C837.4,1392.1 838.2,1391.2 838.7,1393.0C839.1,1394.8 839.0,1397.4 838.1,1398.9C837.3,1400.3 836.8,1399.9 834.8,1399.1C832.8,1398.2 831.8,1396.9 829.7,1395.3C827.6,1393.6 827.4,1393.8 825.9,1392.1C824.4,1390.4 824.5,1389.8 823.3,1388.0C822.1,1386.3 821.9,1386.2 820.7,1384.7C819.5,1383.1 819.7,1383.0 818.2,1381.3C816.7,1379.6 816.0,1379.1 814.3,1377.5C812.7,1375.9 812.0,1375.5 811.3,1374.5C810.6,1373.5 810.0,1373.3 811.3,1373.2Z" fill="#e4e7ea"/>
<path d="M836.6,1401.1C836.6,1400.4 838.0,1399.4 839.9,1399.3C841.9,1399.3 842.7,1400.6 845.1,1400.9C847.4,1401.2 847.8,1400.3 850.2,1400.4C852.6,1400.6 852.9,1400.7 855.3,1401.4C857.7,1402.0 859.2,1402.2 860.4,1403.2C861.6,1404.1 861.6,1405.1 860.4,1405.4C859.2,1405.8 858.0,1405.1 855.3,1404.8C852.6,1404.4 851.6,1404.4 848.9,1404.1C846.2,1403.8 845.9,1403.8 843.8,1403.4C841.7,1403.0 841.6,1403.0 839.9,1402.5C838.3,1402.0 836.6,1401.9 836.6,1401.1Z" fill="#e4e7ea"/>
<path d="M846.3,1382.4C846.6,1381.3 846.4,1381.4 847.6,1381.3C848.8,1381.2 849.4,1382.8 851.5,1382.2C853.6,1381.6 854.5,1380.3 856.6,1378.6C858.7,1376.9 858.6,1376.9 860.4,1375.0C862.2,1373.1 862.8,1371.6 864.3,1370.5C865.8,1369.4 865.8,1369.8 866.8,1370.2C867.8,1370.7 867.3,1371.4 868.6,1372.3C869.9,1373.2 872.3,1373.2 872.5,1374.1C872.6,1375.0 870.2,1374.9 869.4,1376.1C868.5,1377.4 868.3,1377.8 868.9,1379.5C869.5,1381.2 872.1,1382.3 871.9,1383.6C871.8,1384.8 869.2,1384.0 868.4,1384.9C867.5,1385.8 869.0,1386.2 868.4,1387.6C867.7,1389.0 866.5,1389.1 865.5,1390.7C864.6,1392.4 865.4,1393.8 864.3,1394.8C863.1,1395.8 862.5,1395.4 860.7,1395.0C858.9,1394.7 858.4,1393.6 856.6,1393.2C854.7,1392.8 854.4,1393.5 852.7,1393.2C851.1,1393.0 850.3,1393.1 849.4,1392.1C848.5,1391.0 849.6,1390.1 848.9,1388.7C848.2,1387.4 846.9,1387.7 846.3,1386.2C845.7,1384.8 846.0,1383.6 846.3,1382.4Z" fill="#e4e7ea"/>
<path d="M874.0,1384.0C874.7,1383.4 875.1,1383.0 877.1,1382.9C879.0,1382.8 879.7,1383.7 882.2,1383.6C884.7,1383.4 886.9,1381.9 887.8,1382.2C888.7,1382.5 887.9,1384.3 886.0,1384.9C884.1,1385.5 882.0,1384.6 879.6,1384.7C877.2,1384.7 876.8,1384.4 875.8,1385.1C874.8,1385.9 874.7,1387.2 875.3,1387.8C875.9,1388.5 876.5,1387.9 878.3,1387.8C880.1,1387.8 882.2,1387.2 882.9,1387.6C883.7,1388.0 882.7,1388.8 881.7,1389.4C880.6,1390.0 878.6,1389.2 878.3,1390.1C878.0,1390.9 879.4,1391.6 880.4,1393.0C881.4,1394.4 882.6,1394.8 882.7,1395.9C882.8,1397.0 881.9,1397.7 880.9,1397.7C879.9,1397.7 879.2,1397.2 878.3,1395.9C877.4,1394.6 877.8,1392.9 877.1,1392.1C876.3,1391.3 875.6,1391.1 875.3,1392.5C874.9,1394.0 876.0,1396.9 875.5,1398.2C875.0,1399.5 873.9,1399.2 873.2,1398.2C872.6,1397.1 873.1,1395.1 872.7,1393.7C872.3,1392.2 871.6,1393.3 871.7,1391.9C871.8,1390.5 872.7,1389.1 873.2,1387.6C873.8,1386.1 873.8,1386.2 874.0,1385.4C874.2,1384.5 873.3,1384.6 874.0,1384.0Z" fill="#e4e7ea"/>
<path d="M861.7,1404.1C862.4,1404.1 863.4,1404.4 863.5,1404.8C863.6,1405.1 862.9,1405.7 862.2,1405.7C861.5,1405.6 860.5,1404.9 860.4,1404.5C860.3,1404.2 861.0,1404.0 861.7,1404.1Z" fill="#e4e7ea"/>
<path d="M864.3,1404.5C864.7,1404.3 865.8,1404.4 866.1,1404.8C866.4,1405.1 866.0,1405.9 865.5,1406.1C865.1,1406.3 864.3,1406.0 864.0,1405.7C863.7,1405.3 863.8,1404.7 864.3,1404.5Z" fill="#e4e7ea"/>
<path d="M866.3,1404.8C867.2,1404.4 868.8,1404.4 870.1,1404.5C871.5,1404.6 872.1,1404.8 871.9,1405.2C871.8,1405.6 870.7,1405.9 869.4,1406.1C868.1,1406.3 867.0,1406.4 866.3,1406.1C865.6,1405.8 865.4,1405.1 866.3,1404.8Z" fill="#e4e7ea"/>
<path d="M874.2,1404.8C875.2,1404.6 876.5,1405.0 878.3,1405.0C880.2,1404.9 881.4,1404.4 882.2,1404.5C883.0,1404.7 882.9,1405.3 881.7,1405.7C880.5,1406.0 878.8,1405.9 877.1,1405.9C875.3,1405.9 874.9,1405.9 874.2,1405.7C873.6,1405.4 873.3,1404.9 874.2,1404.8Z" fill="#e4e7ea"/>
<path d="M883.5,1409.1C883.8,1408.5 884.5,1407.7 886.0,1406.8C887.5,1405.9 888.2,1405.7 889.9,1405.2C891.5,1404.7 892.9,1404.5 893.2,1404.8C893.5,1405.0 892.5,1405.6 891.1,1406.4C889.8,1407.1 888.8,1407.5 887.3,1408.2C885.8,1408.9 885.6,1409.1 884.7,1409.3C883.8,1409.5 883.2,1409.7 883.5,1409.1Z" fill="#e4e7ea"/>
<path d="M871.9,1407.0C872.4,1406.9 874.2,1407.1 875.3,1407.5C876.3,1407.9 877.0,1408.7 876.5,1408.9C876.1,1409.0 874.6,1408.6 873.5,1408.2C872.4,1407.7 871.5,1407.2 871.9,1407.0Z" fill="#e4e7ea"/>
<path d="M893.7,1383.8C893.9,1382.6 894.3,1381.5 895.0,1381.3C895.7,1381.1 896.7,1382.2 896.8,1383.1C896.9,1384.0 895.7,1384.1 895.5,1385.1C895.3,1386.2 896.3,1387.3 896.0,1387.6C895.7,1387.9 894.7,1387.4 894.2,1386.5C893.7,1385.6 893.5,1385.0 893.7,1383.8Z" fill="#e4e7ea"/>
<path d="M894.7,1392.5C895.6,1392.2 897.1,1391.9 898.8,1392.1C900.6,1392.3 902.1,1392.9 902.1,1393.2C902.1,1393.6 900.5,1393.6 898.8,1393.7C897.1,1393.7 895.9,1393.7 895.0,1393.5C894.0,1393.2 893.8,1392.9 894.7,1392.5Z" fill="#e4e7ea"/>
<path d="M889.9,1393.0C890.6,1392.8 892.5,1392.9 892.9,1393.2C893.4,1393.5 892.4,1394.1 891.7,1394.4C890.9,1394.6 890.3,1394.4 889.9,1394.1C889.4,1393.8 889.1,1393.2 889.9,1393.0Z" fill="#e4e7ea"/>
<path d="M875.3,1349.3C875.6,1347.9 874.8,1345.2 875.8,1343.9C876.7,1342.6 878.3,1343.0 879.4,1343.7C880.4,1344.4 880.6,1345.6 880.4,1347.0C880.2,1348.4 879.0,1348.3 878.6,1349.8C878.2,1351.3 878.1,1352.3 878.9,1353.3C879.6,1354.3 880.3,1353.3 881.7,1354.0C883.0,1354.7 884.3,1355.6 884.7,1356.3C885.2,1357.1 884.4,1357.5 883.5,1357.2C882.6,1357.0 882.2,1355.7 880.9,1355.2C879.6,1354.6 879.0,1355.1 877.8,1354.7C876.7,1354.3 876.9,1354.4 876.0,1353.3C875.2,1352.2 874.4,1351.0 874.2,1350.0C874.1,1349.1 874.9,1350.8 875.3,1349.3Z" fill="#e4e7ea"/>
<path d="M879.6,1370.0C880.2,1369.5 881.5,1367.8 883.5,1366.4C885.4,1365.0 886.3,1363.8 888.1,1363.9C889.8,1363.9 890.2,1365.2 890.9,1366.6C891.6,1368.0 891.6,1368.7 891.1,1370.0C890.7,1371.3 889.7,1371.6 889.1,1372.3C888.4,1373.0 889.2,1373.1 888.3,1373.0C887.4,1372.8 886.1,1372.5 885.3,1371.6C884.4,1370.7 885.8,1369.8 884.7,1369.1C883.7,1368.4 882.1,1368.4 880.9,1368.7C879.7,1368.9 879.0,1370.5 879.6,1370.0Z" fill="#e4e7ea"/>
<path d="M885.5,1357.5C885.9,1356.8 887.3,1357.0 888.1,1357.7C888.8,1358.4 889.0,1359.3 888.8,1360.5C888.7,1361.6 887.9,1362.7 887.3,1362.7C886.7,1362.7 886.7,1361.7 886.3,1360.5C885.9,1359.2 885.1,1358.1 885.5,1357.5Z" fill="#e4e7ea"/>
<path d="M879.6,1359.1C880.2,1358.5 882.0,1358.8 882.7,1359.8C883.4,1360.7 882.9,1362.0 882.7,1363.2C882.5,1364.4 882.3,1365.3 881.7,1365.0C881.1,1364.8 880.6,1363.4 880.1,1362.1C879.7,1360.7 879.0,1359.6 879.6,1359.1Z" fill="#e4e7ea"/>
<path d="M876.5,1355.4C877.0,1355.2 878.1,1355.3 878.3,1355.8C878.6,1356.4 878.0,1357.7 877.6,1357.9C877.2,1358.1 876.8,1357.4 876.5,1356.8C876.3,1356.2 876.1,1355.6 876.5,1355.4Z" fill="#e4e7ea"/>
<path d="M867.3,1366.8C867.6,1366.4 869.3,1365.3 870.7,1363.9C872.0,1362.5 872.7,1361.2 873.2,1360.9C873.7,1360.6 873.6,1361.6 872.7,1362.7C871.8,1363.9 870.6,1365.0 869.4,1365.9C868.1,1366.9 867.0,1367.3 867.3,1366.8Z" fill="#e4e7ea"/>
<path d="M874.8,1332.6C874.8,1331.1 875.7,1329.7 876.5,1328.4C877.4,1327.2 878.0,1327.1 878.6,1327.2C879.2,1327.3 879.3,1327.7 879.1,1328.9C878.9,1330.2 878.4,1331.2 877.8,1332.6C877.2,1334.1 877.3,1335.1 876.5,1335.1C875.8,1335.1 874.8,1334.2 874.8,1332.6Z" fill="#e4e7ea"/>
<path d="M845.6,1341.8C846.0,1341.0 846.4,1340.3 847.6,1339.9C848.9,1339.4 850.1,1339.6 850.9,1339.9C851.8,1340.2 851.9,1340.1 851.5,1341.1C851.0,1342.0 850.2,1343.4 848.9,1343.9C847.6,1344.5 846.6,1344.0 845.8,1343.5C845.1,1343.0 845.2,1342.6 845.6,1341.8Z" fill="#e4e7ea"/>
<path d="M771.6,1363.9C771.9,1363.3 772.0,1363.7 772.9,1364.3C773.8,1365.0 774.5,1365.4 775.4,1366.6C776.4,1367.8 776.9,1368.2 777.0,1369.3C777.0,1370.5 776.6,1370.9 775.7,1371.6C774.7,1372.3 773.8,1372.9 772.9,1372.5C771.9,1372.1 771.9,1371.4 771.6,1370.0C771.3,1368.6 771.6,1368.0 771.6,1366.6C771.6,1365.2 771.3,1364.4 771.6,1363.9Z" fill="#e4e7ea"/>
<path d="M902.4,1304.7C903.0,1304.1 903.7,1303.0 905.2,1302.0C906.8,1300.9 907.1,1300.8 909.1,1300.3C911.0,1299.9 912.1,1300.6 913.7,1300.0C915.3,1299.4 915.0,1299.0 916.0,1297.8C917.0,1296.6 916.6,1295.6 918.0,1295.0C919.4,1294.4 920.4,1296.0 921.9,1295.3C923.4,1294.5 923.5,1293.7 924.4,1291.9C925.3,1290.0 925.2,1289.3 925.7,1287.5C926.2,1285.7 925.6,1284.9 926.5,1283.9C927.3,1283.0 928.5,1282.5 929.3,1283.3C930.1,1284.2 929.4,1285.8 929.8,1287.5C930.2,1289.1 930.9,1289.2 930.8,1290.4C930.8,1291.6 930.1,1291.4 929.5,1292.7C928.9,1294.0 928.7,1294.5 928.3,1296.1C927.8,1297.7 928.1,1298.2 927.5,1299.5C926.8,1300.8 926.6,1301.0 925.4,1301.7C924.3,1302.4 924.1,1302.3 922.6,1302.5C921.2,1302.7 920.4,1302.2 919.3,1302.5C918.2,1302.8 918.7,1302.8 917.8,1303.6C916.9,1304.4 916.4,1305.8 915.5,1305.8C914.5,1305.7 914.9,1304.0 913.7,1303.3C912.5,1302.6 912.0,1302.7 910.3,1302.8C908.7,1302.8 908.3,1303.2 906.5,1303.6C904.7,1304.0 903.6,1304.2 902.7,1304.4C901.7,1304.7 901.8,1305.3 902.4,1304.7Z" fill="#e4e7ea"/>
<path d="M926.2,1283.0C925.8,1282.2 925.7,1279.8 926.5,1278.5C927.2,1277.2 928.7,1279.2 929.5,1277.6C930.4,1275.9 929.2,1272.2 930.1,1271.3C930.9,1270.4 931.3,1272.9 933.4,1273.8C935.5,1274.7 937.5,1274.2 939.0,1275.1C940.5,1275.9 940.5,1276.8 939.8,1277.6C939.1,1278.4 937.3,1277.6 935.9,1278.5C934.6,1279.4 935.2,1281.2 933.9,1281.5C932.6,1281.9 931.6,1279.9 930.3,1280.0C929.0,1280.2 929.2,1281.4 928.3,1282.1C927.3,1282.8 926.6,1283.9 926.2,1283.0Z" fill="#e4e7ea"/>
<path d="M900.1,1305.8C900.9,1305.2 901.6,1304.5 902.7,1304.7C903.7,1304.9 904.4,1305.3 904.7,1306.6C905.0,1307.9 904.6,1308.9 903.9,1310.3C903.3,1311.7 902.7,1312.2 901.9,1312.4C901.1,1312.6 900.9,1312.1 900.6,1311.1C900.4,1310.1 901.2,1309.1 900.9,1308.2C900.6,1307.2 899.5,1307.7 899.3,1307.1C899.2,1306.5 899.3,1306.3 900.1,1305.8Z" fill="#e4e7ea"/>
<path d="M906.2,1304.7C907.3,1304.1 909.5,1303.5 910.9,1303.6C912.2,1303.7 912.4,1304.3 912.1,1305.0C911.9,1305.6 910.9,1305.7 909.8,1306.3C908.8,1306.9 908.3,1307.6 907.5,1307.6C906.7,1307.6 906.8,1307.0 906.5,1306.3C906.2,1305.6 905.2,1305.3 906.2,1304.7Z" fill="#e4e7ea"/>
<path d="M930.8,1239.8C931.5,1239.7 932.3,1240.8 933.1,1242.9C933.9,1244.9 934.0,1245.9 934.1,1248.4C934.3,1251.0 933.5,1251.6 933.9,1253.8C934.3,1256.1 936.1,1256.8 935.9,1258.0C935.8,1259.2 933.8,1257.6 933.4,1259.0C933.0,1260.5 934.0,1262.2 934.1,1264.1C934.3,1266.0 934.6,1266.5 934.1,1267.1C933.7,1267.7 933.1,1266.3 932.4,1266.7C931.6,1267.2 931.2,1270.0 930.8,1269.0C930.4,1268.0 930.4,1265.2 930.6,1262.4C930.7,1259.7 931.3,1259.7 931.3,1257.3C931.4,1254.9 931.1,1254.3 930.8,1252.0C930.5,1249.8 930.2,1249.7 930.1,1247.7C929.9,1245.6 930.1,1245.1 930.3,1243.2C930.5,1241.4 930.2,1239.9 930.8,1239.8Z" fill="#e4e7ea"/>
<path d="M699.1,1152.0C700.0,1153.6 701.6,1154.0 704.3,1155.5C706.9,1156.9 708.3,1157.7 710.7,1158.2C713.0,1158.7 714.2,1159.0 714.5,1157.5C714.8,1156.1 712.8,1154.9 711.9,1152.0C711.0,1149.0 710.7,1147.8 710.7,1144.7C710.7,1141.5 710.7,1141.7 711.9,1138.6C713.1,1135.4 713.1,1135.0 715.8,1131.3C718.5,1127.6 719.3,1126.7 723.5,1122.8C727.6,1118.9 729.2,1117.6 733.7,1114.6C738.2,1111.6 740.3,1111.9 742.7,1109.9C745.0,1107.8 745.4,1106.8 743.9,1105.9C742.4,1105.0 740.4,1104.3 736.3,1105.9C732.1,1107.5 730.5,1109.6 726.0,1112.7C721.5,1115.8 720.9,1116.1 717.1,1119.2C713.2,1122.4 712.1,1122.7 709.4,1126.3C706.7,1129.9 706.7,1130.8 705.5,1134.6C704.3,1138.4 705.5,1139.2 704.3,1142.4C703.1,1145.6 701.6,1146.1 700.4,1148.4C699.2,1150.6 698.2,1150.3 699.1,1152.0Z" fill="#e4e7ea"/>
<path d="M595.5,1077.0C596.7,1073.3 598.9,1072.8 601.9,1071.9C604.8,1071.0 605.3,1072.3 608.3,1073.2C611.2,1074.1 611.7,1072.3 614.7,1075.7C617.6,1079.1 620.8,1083.6 621.1,1087.7C621.4,1091.8 617.4,1090.3 615.9,1093.3C614.4,1096.4 615.9,1097.2 614.7,1100.8C613.5,1104.5 612.9,1107.7 610.8,1108.9C608.7,1110.1 607.7,1108.5 605.7,1105.9C603.7,1103.3 604.5,1101.9 602.4,1097.7C600.3,1093.4 598.4,1092.6 596.7,1087.7C595.1,1082.9 594.3,1080.7 595.5,1077.0Z" fill="#e4e7ea"/>
<path d="M614.7,1069.3C616.5,1066.8 619.1,1065.6 623.6,1065.2C628.1,1064.9 630.9,1066.1 633.9,1067.9C636.8,1069.8 637.6,1070.2 636.4,1073.2C635.2,1076.1 632.3,1079.2 628.7,1080.7C625.2,1082.1 624.0,1080.6 621.1,1079.4C618.1,1078.3 617.4,1078.1 615.9,1075.7C614.4,1073.3 612.9,1071.7 614.7,1069.3Z" fill="#e4e7ea"/>
<path d="M622.3,1093.3C623.5,1092.3 626.0,1092.7 627.5,1094.4C629.0,1096.2 629.3,1098.9 628.7,1100.8C628.1,1102.8 626.4,1103.4 624.9,1102.9C623.4,1102.4 622.9,1101.0 622.3,1098.7C621.7,1096.5 621.1,1094.3 622.3,1093.3Z" fill="#e4e7ea"/>
<path d="M811.8,1056.8C814.5,1055.1 815.5,1054.3 818.2,1055.3C820.9,1056.3 823.3,1057.8 823.3,1061.1C823.3,1064.3 820.9,1067.7 818.2,1069.3C815.5,1070.9 814.5,1069.5 811.8,1067.9C809.1,1066.4 806.7,1065.1 806.7,1062.5C806.7,1059.9 809.1,1058.5 811.8,1056.8Z" fill="#e4e7ea"/>
<path d="M810.5,1073.2C812.6,1071.1 814.6,1070.1 818.2,1071.9C821.8,1073.6 822.3,1077.8 825.9,1080.7C829.4,1083.5 832.6,1081.5 833.5,1084.2C834.4,1086.9 832.1,1091.2 829.7,1092.2C827.3,1093.3 826.6,1090.5 823.3,1088.9C820.0,1087.3 818.9,1087.3 815.6,1085.4C812.3,1083.5 810.4,1083.5 809.2,1080.7C808.0,1077.8 808.4,1075.2 810.5,1073.2Z" fill="#e4e7ea"/>
<path d="M823.3,1093.3C825.4,1092.3 827.7,1093.0 831.0,1092.2C834.3,1091.5 835.6,1089.0 837.4,1090.0C839.2,1091.0 839.6,1094.3 838.7,1096.6C837.8,1098.9 836.2,1099.5 833.5,1099.8C830.9,1100.0 829.8,1098.4 827.1,1097.7C824.5,1096.9 822.9,1097.6 822.0,1096.6C821.1,1095.6 821.2,1094.4 823.3,1093.3Z" fill="#e4e7ea"/>
<path d="M918.0,1121.9C918.3,1119.2 919.6,1116.1 923.1,1114.6C926.7,1113.1 929.8,1114.3 933.4,1115.6C937.0,1116.8 937.9,1118.0 938.5,1120.1C939.1,1122.2 938.3,1122.9 935.9,1124.5C933.6,1126.2 931.5,1126.7 928.3,1127.1C925.0,1127.5 924.2,1127.5 921.9,1126.3C919.5,1125.1 917.7,1124.6 918.0,1121.9Z" fill="#e4e7ea"/>
<path d="M942.3,1121.9C943.8,1121.1 946.4,1120.6 948.7,1121.0C951.1,1121.4 953.2,1122.4 952.6,1123.7C952.0,1124.9 948.6,1126.1 946.2,1126.3C943.8,1126.5 943.2,1125.6 942.3,1124.5C941.4,1123.5 940.8,1122.7 942.3,1121.9Z" fill="#e4e7ea"/>
<path d="M925.2,1137.8C925.9,1136.3 927.3,1134.0 929.5,1133.8C931.8,1133.6 934.4,1135.7 934.7,1137.0C935.0,1138.3 932.7,1138.6 930.8,1139.3C928.9,1140.1 927.8,1140.5 926.5,1140.1C925.2,1139.7 924.5,1139.2 925.2,1137.8Z" fill="#e4e7ea"/>
<path d="M599.0,1293.3C599.6,1292.9 599.7,1292.9 601.6,1292.7C603.5,1292.5 606.2,1291.6 607.2,1292.4C608.3,1293.2 607.0,1295.1 606.2,1296.1C605.4,1297.1 605.5,1297.1 603.9,1296.7C602.3,1296.3 600.4,1295.2 599.3,1294.4C598.2,1293.6 598.5,1293.7 599.0,1293.3Z" fill="#e4e7ea"/>
<path d="M588.3,1284.8C588.7,1284.2 589.9,1283.7 590.9,1283.9C591.8,1284.2 592.1,1284.7 592.4,1286.0C592.6,1287.4 592.5,1288.7 591.9,1289.8C591.3,1290.9 590.5,1290.8 589.8,1290.7C589.1,1290.6 589.0,1290.5 588.8,1289.5C588.6,1288.6 589.2,1287.7 589.1,1286.6C588.9,1285.5 587.9,1285.5 588.3,1284.8Z" fill="#e4e7ea"/>
<path d="M589.3,1280.3C589.7,1279.3 590.8,1278.2 591.4,1278.5C591.9,1278.8 591.7,1280.4 591.6,1281.5C591.5,1282.7 591.3,1283.1 590.9,1283.3C590.4,1283.6 590.2,1283.5 589.8,1282.7C589.5,1282.0 589.0,1281.3 589.3,1280.3Z" fill="#e4e7ea"/>
<path d="M627.7,1300.0C628.3,1299.8 628.4,1299.8 630.0,1300.0C631.6,1300.2 633.6,1300.5 634.6,1300.9C635.6,1301.2 635.3,1301.4 634.4,1301.7C633.4,1301.9 632.1,1302.1 630.5,1302.0C628.9,1301.8 628.1,1301.6 627.5,1301.1C626.8,1300.7 627.1,1300.3 627.7,1300.0Z" fill="#e4e7ea"/>
<path d="M650.0,1301.4C650.3,1301.0 650.4,1301.0 651.8,1300.6C653.2,1300.2 655.3,1299.5 655.9,1299.8C656.5,1300.0 655.3,1301.0 654.3,1301.7C653.4,1302.4 652.7,1302.6 651.8,1302.8C650.8,1302.9 650.7,1302.6 650.2,1302.2C649.8,1301.9 649.6,1301.8 650.0,1301.4Z" fill="#e4e7ea"/>
<path d="M573.4,1288.7C573.6,1288.2 574.9,1287.6 575.5,1287.6C576.1,1287.6 576.3,1288.2 576.1,1288.7C576.0,1289.1 575.6,1289.5 575.0,1289.5C574.4,1289.5 573.3,1289.1 573.4,1288.7Z" fill="#e4e7ea"/>
<path d="M595.5,1234.3C596.2,1233.5 598.3,1232.6 599.3,1232.7C600.3,1232.8 599.7,1233.7 599.6,1234.7C599.4,1235.7 599.4,1236.7 598.5,1237.1C597.7,1237.4 596.7,1236.9 596.0,1236.3C595.3,1235.6 594.7,1235.1 595.5,1234.3Z" fill="#e4e7ea"/>
<path d="M592.4,1235.1C592.8,1234.7 594.2,1234.7 594.7,1235.1C595.2,1235.5 595.1,1236.5 594.7,1236.9C594.3,1237.2 593.4,1237.1 592.9,1236.7C592.4,1236.3 592.0,1235.5 592.4,1235.1Z" fill="#e4e7ea"/>
<path d="M613.9,1229.0C614.3,1228.1 615.4,1225.7 615.9,1225.3C616.5,1224.9 616.6,1226.4 616.2,1227.4C615.8,1228.3 614.9,1229.1 614.4,1229.4C613.9,1229.8 613.5,1230.0 613.9,1229.0Z" fill="#e4e7ea"/>
<path d="M409.9,1361.6C410.5,1361.2 411.1,1361.0 411.4,1361.4C411.7,1361.7 411.7,1362.6 411.1,1363.0C410.5,1363.3 409.1,1363.3 408.8,1363.0C408.5,1362.6 409.3,1362.0 409.9,1361.6Z" fill="#e4e7ea"/>
<path d="M687.1,1273.2C687.2,1271.9 687.3,1271.7 688.9,1270.3C690.5,1268.9 691.6,1268.1 694.0,1267.1C696.4,1266.1 697.0,1266.1 699.1,1266.1C701.2,1266.1 702.0,1265.9 703.0,1267.1C703.9,1268.3 704.3,1270.1 703.2,1271.3C702.2,1272.5 700.3,1271.6 698.6,1272.2C697.0,1272.9 695.9,1272.8 696.1,1274.1C696.2,1275.4 697.8,1276.0 699.1,1277.9C700.5,1279.7 700.9,1279.9 701.7,1282.1C702.5,1284.4 702.0,1285.6 702.7,1287.5C703.4,1289.4 704.2,1288.6 704.8,1290.4C705.4,1292.2 706.3,1293.7 705.3,1295.3C704.3,1296.8 702.6,1297.0 700.4,1297.0C698.3,1296.9 697.9,1296.2 696.1,1295.0C694.2,1293.8 693.0,1293.8 692.5,1291.9C692.0,1289.9 693.2,1287.9 694.0,1286.6C694.9,1285.3 696.5,1287.5 696.1,1286.3C695.6,1285.1 693.8,1283.4 692.2,1281.5C690.7,1279.7 690.3,1279.8 689.4,1278.5C688.5,1277.2 688.9,1277.2 688.4,1276.0C687.9,1274.8 687.0,1274.5 687.1,1273.2Z" fill="#ffffff"/>
<path d="M651.5,1448.5C651.6,1449.0 651.1,1451.8 650.5,1452.7C649.9,1453.6 647.4,1455.5 646.7,1456.3C645.9,1457.2 644.8,1459.1 644.1,1460.0C643.4,1460.9 640.9,1463.4 640.3,1464.0C639.6,1464.5 639.6,1464.1 638.7,1464.5C637.9,1464.9 634.2,1466.9 632.8,1467.2C631.5,1467.5 628.5,1467.1 627.5,1467.2C626.4,1467.3 624.7,1467.5 623.6,1467.7C622.6,1468.0 619.6,1469.3 618.5,1469.4C617.4,1469.4 614.9,1468.6 614.4,1468.0C613.9,1467.4 613.9,1464.8 613.9,1464.0C613.9,1463.1 614.4,1461.4 614.1,1460.5C613.9,1459.6 612.1,1457.5 611.6,1456.6C611.1,1455.7 609.5,1453.4 609.5,1453.0C609.6,1452.6 611.4,1453.1 612.1,1453.2C612.8,1453.3 615.2,1453.8 615.9,1453.7C616.7,1453.6 618.2,1453.7 618.5,1452.5C618.8,1451.2 618.3,1443.9 618.5,1443.4C618.7,1442.9 620.0,1448.0 620.5,1448.4C621.1,1448.7 623.0,1446.8 623.6,1446.4C624.3,1445.9 625.6,1444.8 626.2,1444.6C626.8,1444.5 628.0,1445.3 628.7,1445.4C629.5,1445.5 632.0,1445.6 632.6,1445.4C633.1,1445.1 633.0,1443.5 633.3,1443.2C633.7,1442.8 635.5,1442.5 635.9,1442.2C636.3,1441.8 636.1,1440.9 636.4,1440.4C636.8,1440.0 638.3,1438.9 639.0,1438.5C639.7,1438.1 641.6,1437.1 642.6,1437.0C643.5,1436.9 646.7,1436.9 647.4,1437.5C648.2,1438.2 648.7,1441.4 649.0,1442.7C649.2,1443.9 649.2,1447.7 649.5,1448.4C649.8,1449.1 651.4,1448.0 651.5,1448.5Z" fill="#b7d5f9" stroke="#b7d5f9" stroke-width="0.8"/>
<path d="M639.5,1453.0C640.1,1452.9 641.7,1454.1 642.1,1454.5C642.4,1454.9 642.5,1455.9 642.3,1456.3C642.1,1456.7 640.6,1458.1 640.0,1458.1C639.4,1458.2 637.6,1457.2 637.2,1456.8C636.8,1456.5 636.4,1455.5 636.7,1455.0C636.9,1454.6 638.9,1453.0 639.5,1453.0Z" fill="#e4e7ea" stroke="#e4e7ea" stroke-width="0.8"/>
<path d="M693.5,1413.0C694.4,1414.5 695.8,1418.5 696.1,1420.6C696.4,1422.8 695.3,1421.1 694.8,1422.3C694.3,1423.5 694.5,1423.9 694.0,1425.8C693.5,1427.7 693.5,1428.0 692.7,1430.5C692.0,1433.0 692.0,1433.5 690.9,1436.5C689.9,1439.5 689.8,1441.4 688.1,1443.4C686.5,1445.4 685.7,1445.0 683.8,1445.1C681.9,1445.3 681.1,1445.0 679.9,1443.9C678.7,1442.7 679.1,1441.9 678.7,1440.2C678.2,1438.5 677.7,1438.5 678.1,1436.5C678.6,1434.6 680.2,1433.7 680.7,1431.7C681.2,1429.8 680.6,1429.8 680.5,1428.1C680.3,1426.5 679.5,1426.0 679.9,1424.6C680.4,1423.2 681.0,1423.1 682.5,1422.3C684.0,1421.4 684.8,1421.7 686.3,1421.1C687.8,1420.4 688.0,1420.5 688.9,1419.5C689.8,1418.4 689.4,1417.7 690.2,1416.4C691.0,1415.2 691.5,1414.9 692.2,1414.1C693.0,1413.3 692.6,1411.5 693.5,1413.0Z" fill="#b7d5f9"/>
<path d="M902.7,1387.6C903.6,1387.1 904.7,1386.7 906.5,1386.7C908.3,1386.7 909.3,1386.5 910.3,1387.6C911.4,1388.6 910.1,1389.9 910.9,1391.2C911.6,1392.5 911.7,1393.5 913.4,1393.2C915.1,1392.9 915.8,1390.5 918.0,1389.8C920.3,1389.2 920.8,1390.1 923.1,1390.5C925.5,1390.9 925.9,1391.0 928.3,1391.6C930.6,1392.3 931.3,1392.8 933.4,1393.5C935.5,1394.1 935.5,1393.5 937.2,1394.4C938.9,1395.2 939.1,1395.9 940.5,1397.1C942.0,1398.2 942.4,1398.4 943.6,1399.3C944.8,1400.2 945.5,1400.1 945.7,1400.9C945.8,1401.7 944.0,1401.5 944.4,1402.7C944.8,1403.9 945.8,1404.7 947.5,1406.1C949.1,1407.5 949.9,1407.8 951.3,1408.6C952.7,1409.5 953.9,1409.7 953.3,1409.8C952.8,1409.9 950.7,1409.4 948.7,1409.1C946.8,1408.8 946.7,1409.2 944.9,1408.4C943.1,1407.6 942.9,1406.9 941.1,1405.7C939.3,1404.4 938.7,1403.5 937.2,1403.2C935.7,1402.9 935.9,1403.5 934.7,1404.3C933.5,1405.1 933.6,1406.1 932.1,1406.6C930.6,1407.1 930.1,1406.9 928.3,1406.4C926.5,1405.8 926.2,1404.5 924.4,1404.1C922.6,1403.7 921.1,1405.1 920.6,1404.5C920.1,1403.9 922.4,1403.1 922.4,1401.6C922.4,1400.1 922.2,1399.5 920.6,1398.2C919.0,1396.9 917.8,1397.0 915.5,1396.2C913.1,1395.3 912.1,1394.9 910.3,1394.6C908.5,1394.3 908.5,1395.4 907.8,1394.8C907.1,1394.2 907.9,1392.7 907.3,1392.1C906.7,1391.5 906.3,1392.8 905.2,1392.1C904.1,1391.4 903.3,1390.0 902.7,1388.9C902.1,1387.9 901.8,1388.1 902.7,1387.6Z" fill="#b7d5f9"/>
<path d="M932.1,1410.0C933.2,1410.0 933.9,1412.3 934.7,1414.1C935.4,1416.0 934.1,1416.8 935.2,1418.1C936.2,1419.4 938.2,1418.4 939.3,1419.7C940.3,1420.9 939.2,1421.3 939.8,1423.4C940.3,1425.6 940.4,1427.3 941.6,1428.9C942.8,1430.5 943.3,1429.5 944.9,1430.3C946.5,1431.1 946.9,1430.8 948.2,1432.4C949.5,1434.1 949.3,1435.5 950.5,1437.3C951.7,1439.1 951.7,1438.8 953.3,1440.2C955.0,1441.6 956.3,1442.0 957.7,1443.4C959.1,1444.8 958.9,1444.4 959.5,1446.4C960.1,1448.4 960.4,1449.3 960.3,1451.9C960.1,1454.6 959.6,1455.3 959.0,1457.9C958.4,1460.5 958.8,1461.0 957.7,1463.2C956.6,1465.3 955.7,1465.0 954.4,1467.2C953.0,1469.4 952.6,1470.4 951.8,1472.7C951.0,1474.9 952.4,1475.6 951.0,1476.9C949.7,1478.1 948.3,1477.0 946.2,1478.0C944.1,1479.1 943.9,1481.1 942.1,1481.5C940.3,1481.8 940.2,1479.7 938.5,1479.5C936.8,1479.3 936.8,1480.6 934.7,1480.6C932.6,1480.6 931.6,1480.3 929.5,1479.5C927.4,1478.6 926.9,1478.5 925.7,1476.9C924.5,1475.3 925.3,1473.9 924.4,1472.7C923.5,1471.4 922.8,1472.7 921.9,1471.6C921.0,1470.5 921.1,1468.4 920.6,1468.0C920.0,1467.6 919.9,1470.3 919.6,1469.9C919.2,1469.5 919.6,1466.7 919.0,1466.4C918.4,1466.1 918.0,1467.8 917.0,1468.5C916.0,1469.3 915.9,1470.2 914.9,1469.6C914.0,1469.1 914.0,1467.8 912.9,1466.4C911.8,1465.0 912.1,1464.8 910.3,1463.7C908.5,1462.6 907.0,1462.6 905.2,1461.8C903.4,1461.1 904.5,1460.8 902.7,1460.5C900.9,1460.3 900.5,1460.3 897.5,1460.8C894.6,1461.2 892.8,1461.5 889.9,1462.4C886.9,1463.2 886.2,1463.4 884.7,1464.5C883.2,1465.6 885.3,1466.4 883.5,1466.9C881.7,1467.4 879.4,1466.3 877.1,1466.6C874.7,1467.0 875.0,1467.5 873.2,1468.3C871.4,1469.0 871.2,1469.5 869.4,1469.9C867.6,1470.3 867.3,1470.4 865.5,1469.9C863.8,1469.5 862.5,1469.1 862.0,1468.0C861.4,1466.9 862.9,1466.9 863.2,1465.3C863.6,1463.7 863.9,1463.0 863.5,1461.3C863.1,1459.6 862.4,1459.7 861.7,1457.9C861.0,1456.1 861.1,1455.9 860.4,1453.5C859.7,1451.1 859.3,1450.2 858.6,1447.6C858.0,1445.1 857.7,1445.0 857.6,1442.7C857.5,1440.3 857.9,1439.3 858.4,1437.8C858.8,1436.2 858.6,1436.9 859.7,1436.1C860.7,1435.2 861.3,1434.8 863.0,1434.1C864.7,1433.4 864.7,1433.7 866.8,1433.2C868.9,1432.6 869.6,1432.3 871.9,1431.7C874.3,1431.2 875.1,1431.9 877.1,1430.8C879.0,1429.7 879.7,1428.4 880.4,1427.0C881.1,1425.5 879.4,1425.0 880.1,1424.6C880.8,1424.2 882.5,1425.7 883.5,1425.3C884.4,1424.9 883.3,1424.0 884.2,1422.7C885.1,1421.5 885.7,1421.1 887.3,1419.9C888.9,1418.7 889.3,1417.7 891.1,1417.6C892.9,1417.5 893.2,1419.0 895.0,1419.5C896.8,1419.9 897.8,1420.4 898.8,1419.7C899.8,1419.0 898.6,1417.8 899.3,1416.4C900.1,1415.1 900.8,1414.7 902.1,1413.9C903.5,1413.2 904.1,1413.8 905.2,1413.2C906.4,1412.7 905.2,1411.6 907.0,1411.6C908.8,1411.7 910.5,1413.1 912.9,1413.4C915.3,1413.8 916.7,1412.4 917.3,1413.0C917.8,1413.6 916.1,1414.5 915.5,1416.0C914.8,1417.5 914.4,1417.8 914.4,1419.5C914.4,1421.1 914.3,1421.7 915.5,1423.0C916.6,1424.3 917.5,1424.4 919.3,1425.1C921.1,1425.8 921.2,1425.8 923.1,1426.0C925.1,1426.2 926.1,1426.9 927.5,1426.0C928.9,1425.1 928.5,1424.2 929.0,1422.3C929.6,1420.3 929.6,1419.5 929.8,1417.6C930.0,1415.7 929.5,1415.9 930.1,1414.1C930.6,1412.4 931.0,1410.0 932.1,1410.0Z" fill="#7db5ec"/>
<path d="M795.4,1335.8C795.1,1336.0 793.7,1335.8 793.1,1336.0C792.5,1336.3 790.5,1337.8 790.0,1338.2C789.6,1338.6 789.6,1339.1 789.3,1339.4C788.9,1339.7 787.5,1340.1 786.9,1340.4C786.4,1340.6 785.4,1341.2 784.9,1341.6C784.4,1341.9 783.4,1343.0 782.9,1343.5C782.3,1343.9 781.1,1344.9 780.5,1345.3C780.0,1345.8 778.7,1347.2 778.0,1347.7C777.3,1348.2 775.1,1349.4 774.4,1349.8C773.7,1350.2 772.6,1350.7 772.4,1351.2C772.1,1351.7 772.6,1353.4 772.6,1354.0C772.7,1354.6 772.9,1355.5 772.9,1356.1C772.9,1356.6 772.8,1358.1 772.6,1358.6C772.5,1359.2 771.7,1360.5 771.6,1360.9C771.5,1361.4 772.0,1362.2 771.8,1362.5C771.7,1362.8 770.3,1362.9 770.1,1363.2C769.8,1363.5 770.1,1364.5 769.8,1364.8C769.5,1365.1 768.0,1365.4 767.5,1365.7C767.0,1366.0 766.2,1367.5 765.7,1367.5C765.2,1367.5 763.5,1366.0 763.1,1365.5C762.8,1365.0 762.6,1363.8 762.4,1363.2C762.1,1362.6 761.5,1360.8 761.1,1360.0C760.7,1359.2 759.2,1357.4 758.8,1356.5C758.4,1355.7 758.1,1353.5 757.8,1352.8C757.5,1352.1 756.6,1351.2 756.2,1350.5C755.9,1349.8 755.2,1348.0 754.9,1347.0C754.6,1346.0 753.8,1343.2 753.7,1342.3C753.5,1341.4 753.5,1339.8 753.4,1339.2C753.4,1338.5 753.2,1337.5 753.2,1337.0C753.1,1336.5 753.0,1334.6 752.9,1334.6C752.8,1334.5 752.3,1336.4 751.9,1336.8C751.4,1337.2 749.7,1337.9 749.1,1338.0C748.4,1338.0 747.0,1337.8 746.5,1337.5C746.0,1337.1 744.8,1335.4 744.5,1335.1C744.2,1334.7 743.7,1334.5 743.9,1334.3C744.2,1334.2 746.1,1333.8 746.5,1333.6C746.9,1333.4 747.6,1333.0 747.3,1332.9C747.0,1332.8 744.6,1332.9 743.9,1332.6C743.3,1332.4 742.0,1331.3 741.9,1330.9C741.8,1330.5 742.6,1329.6 743.4,1329.4C744.3,1329.2 748.7,1329.6 749.1,1329.2C749.4,1328.8 746.7,1326.6 746.5,1326.0C746.3,1325.3 747.4,1324.1 747.3,1323.7C747.1,1323.3 745.1,1323.1 745.2,1322.7C745.3,1322.3 747.3,1320.5 748.0,1320.2C748.8,1319.9 750.7,1320.5 751.4,1320.2C752.1,1319.9 753.3,1318.2 753.9,1317.6C754.5,1317.0 756.0,1315.7 756.5,1315.0C757.0,1314.4 758.1,1312.8 758.3,1312.1C758.5,1311.5 757.8,1310.1 758.0,1309.8C758.3,1309.4 760.4,1309.3 760.3,1309.0C760.3,1308.7 758.1,1307.7 757.5,1307.1C756.9,1306.5 755.4,1304.7 754.9,1303.9C754.5,1303.0 753.6,1300.9 753.7,1300.0C753.8,1299.2 755.1,1296.8 755.7,1296.4C756.4,1296.0 758.3,1296.0 759.3,1296.4C760.3,1296.8 763.0,1299.1 763.9,1299.8C764.8,1300.4 766.4,1301.2 767.0,1301.7C767.6,1302.2 768.8,1303.2 769.0,1303.9C769.3,1304.5 768.8,1306.6 769.0,1307.1C769.2,1307.6 770.8,1307.7 770.8,1308.2C770.8,1308.7 768.8,1310.9 769.3,1311.6C769.7,1312.4 774.3,1313.7 774.7,1314.5C775.0,1315.3 772.2,1317.5 772.4,1318.1C772.5,1318.8 775.0,1319.7 775.9,1320.2C776.9,1320.6 779.5,1321.3 780.5,1321.7C781.6,1322.1 784.1,1323.2 784.9,1323.5C785.7,1323.7 786.5,1323.6 787.5,1323.7C788.4,1323.8 792.2,1324.6 792.8,1324.2C793.5,1323.8 792.6,1320.7 792.8,1320.4C793.1,1320.2 794.4,1321.6 794.9,1321.9C795.4,1322.3 796.2,1323.3 797.2,1323.5C798.1,1323.6 802.5,1323.3 803.1,1323.0C803.6,1322.6 801.6,1321.2 802.1,1320.7C802.5,1320.1 805.7,1318.8 806.7,1318.4C807.6,1318.0 809.7,1317.3 810.5,1317.1C811.3,1316.9 812.9,1316.3 813.6,1316.6C814.3,1316.8 816.4,1318.8 816.4,1319.4C816.4,1320.0 813.6,1321.6 813.6,1321.9C813.5,1322.3 816.2,1322.1 815.9,1322.4C815.6,1322.8 811.8,1324.6 811.0,1325.2C810.3,1325.8 809.8,1327.1 809.5,1327.7C809.1,1328.3 808.6,1329.9 808.2,1330.2C807.8,1330.5 806.6,1330.1 806.4,1330.4C806.2,1330.7 806.3,1332.3 806.1,1332.9C806.0,1333.4 805.4,1335.1 805.1,1335.1C804.8,1335.0 804.1,1333.1 803.6,1332.6C803.1,1332.2 800.7,1331.7 800.8,1331.2C800.8,1330.6 804.2,1328.2 803.8,1327.7C803.5,1327.2 798.5,1327.5 797.7,1327.2C796.9,1326.9 797.7,1325.6 797.2,1325.2C796.7,1324.9 794.1,1324.1 793.6,1324.2C793.1,1324.4 792.7,1325.9 792.8,1326.5C793.0,1327.1 794.7,1328.8 794.9,1329.4C795.1,1330.1 794.3,1331.5 794.4,1332.1C794.4,1332.7 795.3,1334.2 795.4,1334.6C795.5,1335.0 795.7,1335.6 795.4,1335.8Z" fill="#4b98f3" stroke="#4b98f3" stroke-width="0.8"/>
<path d="M548.4,1295.6C548.7,1295.9 550.6,1297.2 551.2,1297.5C551.8,1297.9 552.9,1298.7 553.5,1298.6C554.0,1298.6 555.5,1297.2 556.0,1297.0C556.6,1296.8 557.7,1297.0 558.3,1297.0C558.9,1296.9 560.7,1296.7 561.2,1296.7C561.6,1296.6 562.0,1296.7 562.4,1296.4C562.9,1296.1 564.6,1294.9 565.0,1294.4C565.4,1294.0 565.7,1292.8 566.0,1292.4C566.3,1292.0 567.8,1291.4 567.8,1291.0C567.9,1290.6 566.4,1289.6 566.5,1289.0C566.7,1288.3 568.6,1286.3 569.1,1285.7C569.5,1285.2 569.9,1284.5 570.4,1284.2C570.8,1284.0 572.3,1283.8 572.9,1283.3C573.5,1282.9 575.6,1280.7 575.5,1280.3C575.3,1279.9 572.4,1280.1 571.7,1280.0C570.9,1279.9 570.0,1279.6 569.1,1279.4C568.2,1279.2 564.7,1278.7 564.0,1278.5C563.2,1278.2 563.4,1277.4 562.7,1277.3C561.9,1277.1 558.7,1277.0 557.6,1276.9C556.5,1276.9 554.2,1276.7 553.2,1276.6C552.3,1276.6 550.2,1276.6 549.4,1276.6C548.5,1276.7 546.5,1277.0 545.8,1277.3C545.1,1277.5 543.6,1278.0 543.5,1278.5C543.3,1279.0 544.4,1280.8 544.5,1281.2C544.6,1281.6 544.3,1281.7 544.5,1281.8C544.8,1281.9 545.8,1282.2 546.6,1282.1C547.3,1282.1 550.1,1281.5 550.7,1281.5C551.2,1281.6 551.5,1282.4 551.4,1282.7C551.3,1283.1 550.1,1284.1 549.9,1284.5C549.7,1285.0 549.7,1286.2 549.6,1286.6C549.6,1287.1 549.5,1287.9 549.4,1288.4C549.3,1288.8 548.6,1289.9 548.6,1290.4C548.6,1290.9 549.4,1292.2 549.4,1292.7C549.3,1293.2 548.2,1294.1 548.1,1294.4C548.0,1294.8 548.0,1295.2 548.4,1295.6Z" fill="#8fbdf6" stroke="#8fbdf6" stroke-width="0.8"/>
<path d="M552.7,1255.2C552.6,1255.5 553.3,1255.8 554.0,1255.7C554.6,1255.7 557.4,1254.8 558.3,1254.5C559.3,1254.3 561.4,1253.6 562.2,1253.5C562.9,1253.3 564.1,1253.1 564.7,1253.1C565.4,1253.1 567.4,1253.3 568.1,1253.1C568.8,1252.9 570.7,1252.0 570.9,1251.7C571.1,1251.3 569.5,1250.9 569.6,1250.2C569.7,1249.6 571.8,1246.9 571.7,1246.2C571.5,1245.6 569.1,1245.2 568.6,1244.7C568.1,1244.3 567.8,1243.0 567.6,1242.5C567.3,1242.0 567.2,1241.0 566.8,1240.6C566.4,1240.1 564.6,1239.3 564.2,1238.6C563.8,1238.0 563.4,1235.7 563.2,1235.1C563.0,1234.5 562.7,1233.7 562.2,1233.5C561.7,1233.3 559.3,1233.3 559.1,1233.1C558.9,1232.9 560.3,1232.4 560.6,1231.9C561.0,1231.4 561.7,1229.2 561.9,1228.6C562.2,1228.0 563.1,1226.8 562.7,1226.5C562.3,1226.2 559.5,1226.1 558.9,1226.1C558.2,1226.1 556.7,1227.0 556.8,1226.5C556.9,1226.1 559.6,1222.8 559.4,1222.3C559.1,1221.8 555.2,1221.9 554.5,1222.3C553.8,1222.6 553.7,1224.6 553.5,1225.3C553.3,1225.9 552.9,1227.2 552.7,1227.8C552.5,1228.4 551.4,1229.7 551.4,1230.3C551.5,1230.8 552.8,1231.6 553.0,1232.3C553.1,1233.0 552.5,1235.6 552.7,1235.9C552.9,1236.2 554.5,1234.4 554.8,1234.7C555.0,1235.0 554.1,1237.9 554.5,1238.2C554.9,1238.6 557.9,1237.4 558.3,1237.5C558.8,1237.6 557.9,1238.6 558.1,1239.0C558.2,1239.4 559.4,1240.5 559.6,1240.9C559.8,1241.4 560.0,1243.0 559.6,1243.2C559.2,1243.5 556.5,1243.0 556.0,1243.2C555.5,1243.5 555.2,1245.1 555.3,1245.5C555.4,1245.9 557.0,1246.2 556.8,1246.6C556.6,1247.0 554.0,1248.4 553.7,1248.8C553.5,1249.2 554.1,1249.7 554.5,1249.9C554.9,1250.0 556.5,1250.2 557.1,1250.2C557.6,1250.3 558.8,1250.1 559.1,1250.2C559.4,1250.4 559.9,1251.2 559.6,1251.3C559.3,1251.4 557.1,1251.1 556.5,1251.3C556.0,1251.6 555.5,1253.0 555.0,1253.5C554.6,1253.9 552.8,1255.0 552.7,1255.2Z" fill="#8fbdf6" stroke="#8fbdf6" stroke-width="0.8"/>
<path d="M595.7,1220.1C595.5,1219.6 594.9,1216.6 594.7,1216.6C594.5,1216.5 594.5,1219.1 594.2,1219.7C593.8,1220.2 592.4,1220.9 591.6,1221.4C590.9,1222.0 588.5,1224.0 587.8,1224.4C587.0,1224.8 585.9,1225.2 585.2,1224.8C584.5,1224.4 582.4,1221.7 581.9,1221.0C581.4,1220.2 580.7,1219.1 580.6,1218.3C580.5,1217.6 580.9,1215.1 580.9,1214.3C580.8,1213.5 580.2,1212.4 580.1,1211.5C580.0,1210.7 579.7,1207.7 580.1,1206.8C580.5,1206.0 582.4,1205.0 583.2,1204.4C583.9,1203.8 585.8,1202.5 586.5,1202.0C587.2,1201.4 588.4,1199.9 589.1,1199.5C589.7,1199.1 591.5,1199.0 592.1,1198.4C592.7,1197.8 593.6,1195.1 594.2,1194.3C594.7,1193.5 596.2,1192.4 596.7,1191.7C597.2,1191.0 598.1,1189.4 598.5,1188.5C598.9,1187.6 599.4,1185.2 600.1,1184.0C600.7,1182.9 603.5,1180.0 604.2,1178.9C604.8,1177.8 605.2,1175.8 605.7,1174.8C606.2,1173.7 607.1,1171.2 608.3,1169.9C609.5,1168.6 614.4,1164.5 615.9,1163.5C617.4,1162.5 619.7,1161.6 621.1,1160.9C622.4,1160.1 626.0,1157.5 627.5,1156.8C628.9,1156.1 632.0,1154.9 633.3,1154.8C634.7,1154.6 637.9,1155.1 639.0,1155.5C640.1,1155.8 641.9,1157.0 642.8,1157.5C643.7,1158.1 646.3,1159.5 646.7,1160.2C647.0,1160.9 646.7,1162.5 646.1,1163.5C645.6,1164.5 642.1,1168.1 641.5,1168.6C641.0,1169.2 641.2,1168.5 641.3,1168.3C641.4,1168.1 642.6,1167.5 642.3,1166.7C642.0,1165.9 639.7,1161.8 638.7,1161.5C637.7,1161.2 634.5,1163.3 633.9,1164.2C633.2,1165.0 633.4,1167.8 633.1,1168.6C632.8,1169.4 631.6,1171.0 631.0,1171.1C630.4,1171.2 628.7,1169.9 628.0,1169.9C627.2,1169.8 625.5,1170.6 624.6,1170.5C623.8,1170.3 621.6,1168.9 621.1,1168.6C620.5,1168.4 620.2,1167.8 619.9,1168.2C619.6,1168.7 619.2,1171.9 618.5,1172.3C617.8,1172.7 614.4,1171.5 613.6,1171.7C612.8,1171.9 612.1,1173.4 611.6,1174.1C611.1,1174.9 609.6,1177.0 609.3,1177.7C608.9,1178.5 608.8,1180.0 608.5,1180.6C608.2,1181.3 607.2,1182.9 606.7,1183.5C606.2,1184.1 604.7,1184.9 604.4,1185.7C604.2,1186.5 604.9,1189.1 604.7,1190.1C604.4,1191.0 602.5,1193.3 602.4,1193.8C602.2,1194.4 603.3,1194.5 603.4,1194.9C603.5,1195.2 603.3,1196.7 602.9,1196.9C602.5,1197.2 600.3,1196.7 599.8,1196.9C599.3,1197.2 598.4,1198.4 598.3,1199.0C598.1,1199.5 598.5,1201.0 598.5,1202.0C598.5,1202.9 598.2,1206.1 598.3,1206.8C598.3,1207.6 598.5,1207.9 598.8,1208.3C599.0,1208.6 600.4,1209.8 600.3,1210.1C600.3,1210.5 598.6,1211.1 598.5,1211.5C598.4,1212.0 599.5,1213.8 599.6,1214.3C599.6,1214.8 599.0,1215.7 598.8,1216.1C598.5,1216.5 597.7,1216.9 597.5,1217.5C597.3,1218.0 597.4,1220.2 597.3,1220.5C597.1,1220.9 596.7,1220.6 596.5,1220.5C596.3,1220.5 595.9,1220.6 595.7,1220.1Z" fill="#8fbdf6" stroke="#8fbdf6" stroke-width="0.8"/>
<path d="M585.7,1243.6C586.0,1243.2 587.3,1242.8 587.8,1242.5C588.3,1242.2 589.6,1241.5 589.8,1240.9C590.0,1240.4 589.1,1237.8 589.3,1237.5C589.5,1237.1 590.9,1237.6 591.4,1237.9C591.8,1238.1 593.0,1239.1 593.4,1239.4C593.9,1239.8 594.7,1240.9 595.2,1240.9C595.7,1241.0 597.2,1240.4 598.0,1240.2C598.8,1240.0 601.2,1238.9 601.9,1239.0C602.5,1239.2 603.5,1240.6 603.7,1241.3C603.8,1242.1 603.2,1244.6 603.4,1245.5C603.5,1246.3 604.7,1247.6 604.9,1248.4C605.1,1249.2 605.8,1251.6 605.2,1252.4C604.5,1253.1 600.1,1254.6 599.3,1254.9C598.5,1255.1 597.9,1254.0 598.3,1254.5C598.7,1255.1 602.4,1258.6 602.6,1259.7C602.9,1260.8 601.7,1263.5 600.6,1264.1C599.5,1264.7 595.0,1264.8 593.4,1264.8C591.8,1264.7 587.4,1264.4 586.8,1263.8C586.2,1263.1 588.7,1259.8 588.3,1259.0C587.9,1258.3 584.3,1257.8 583.7,1257.3C583.1,1256.9 583.0,1255.8 582.9,1255.2C582.8,1254.7 582.7,1253.5 582.7,1252.8C582.6,1252.0 582.4,1249.6 582.7,1249.2C582.9,1248.7 584.4,1249.0 584.7,1248.8C585.0,1248.6 585.1,1247.6 585.2,1247.3C585.3,1247.0 585.4,1246.7 585.5,1246.2C585.5,1245.8 585.5,1244.0 585.7,1243.6Z" fill="#f1f3f5" stroke="#f1f3f5" stroke-width="0.8"/>
<path d="M603.7,1241.3C604.2,1240.7 607.4,1240.2 608.3,1239.8C609.1,1239.4 610.1,1238.5 610.8,1238.2C611.6,1238.0 614.2,1237.7 614.7,1237.9C615.2,1238.0 614.8,1239.3 615.2,1239.4C615.5,1239.6 616.3,1239.2 617.5,1239.2C618.7,1239.2 624.3,1239.4 625.4,1239.6C626.5,1239.8 626.6,1240.2 626.9,1240.9C627.2,1241.7 628.0,1245.1 628.0,1245.8C627.9,1246.6 626.5,1246.8 626.4,1247.3C626.4,1247.8 627.2,1249.6 627.5,1250.2C627.7,1250.9 628.7,1252.2 628.5,1253.1C628.2,1254.1 626.6,1257.8 625.4,1258.3C624.2,1258.9 619.6,1258.1 618.5,1258.0C617.4,1257.9 616.5,1257.9 615.9,1257.7C615.3,1257.4 614.0,1255.9 613.4,1255.6C612.8,1255.2 611.3,1254.8 610.8,1254.5C610.3,1254.3 609.6,1253.8 609.0,1253.5C608.4,1253.2 606.1,1252.2 605.7,1252.0C605.3,1251.9 605.3,1252.8 605.2,1252.4C605.1,1252.0 605.1,1249.2 604.9,1248.4C604.7,1247.6 603.5,1246.3 603.4,1245.5C603.2,1244.6 603.1,1242.0 603.7,1241.3Z" fill="#0070ec" stroke="#0070ec" stroke-width="0.8"/>
<path d="M206.3,1164.8C205.4,1158.7 200.8,1162.8 198.7,1162.2C196.6,1161.6 190.8,1160.2 188.4,1159.5C186.0,1158.9 180.7,1157.5 178.2,1156.8C175.6,1156.1 168.5,1153.4 166.4,1153.4C164.3,1153.4 161.9,1156.0 160.3,1156.8C158.6,1157.6 153.9,1159.2 152.6,1160.2C151.2,1161.2 149.9,1164.4 148.7,1165.4C147.5,1166.5 143.2,1168.4 142.3,1169.2C141.4,1170.1 140.6,1172.1 141.1,1172.9C141.5,1173.8 145.3,1175.6 146.2,1176.5C147.0,1177.4 147.3,1179.8 148.2,1180.6C149.1,1181.4 153.8,1183.1 153.9,1183.5C153.9,1183.8 150.1,1183.3 148.7,1183.5C147.4,1183.7 143.7,1184.6 142.3,1185.2C141.0,1185.7 137.4,1187.5 137.2,1188.5C137.1,1189.5 139.7,1193.1 141.1,1193.8C142.4,1194.5 147.1,1194.3 148.7,1194.3C150.4,1194.3 154.4,1193.3 155.1,1193.8C155.9,1194.3 155.7,1197.6 155.1,1198.4C154.5,1199.3 151.2,1200.8 150.0,1201.5C148.8,1202.2 145.8,1203.6 144.9,1204.4C144.0,1205.3 142.3,1207.7 142.3,1208.7C142.3,1209.8 144.0,1212.4 144.9,1213.4C145.8,1214.4 149.1,1216.2 150.0,1217.0C150.9,1217.8 152.2,1219.9 152.6,1220.5C152.9,1221.2 152.3,1222.2 153.1,1222.3C153.8,1222.4 157.7,1221.5 159.0,1221.4C160.3,1221.4 163.5,1221.2 164.1,1221.8C164.7,1222.4 164.5,1225.6 164.1,1226.5C163.7,1227.5 161.3,1229.0 160.3,1229.9C159.2,1230.7 156.3,1232.7 155.1,1233.5C153.9,1234.4 151.1,1236.5 150.0,1237.1C148.9,1237.7 145.5,1238.5 145.7,1238.6C145.8,1238.7 149.9,1238.3 151.3,1237.9C152.7,1237.4 156.4,1235.8 157.7,1235.1C159.0,1234.5 161.6,1233.1 162.8,1232.3C164.0,1231.5 166.8,1229.2 167.9,1228.2C169.0,1227.2 171.5,1225.0 172.3,1224.0C173.1,1222.9 174.3,1220.1 174.9,1219.2C175.4,1218.4 176.2,1216.8 176.6,1216.6C177.1,1216.4 178.2,1217.1 178.4,1217.5C178.7,1217.8 178.0,1219.7 178.7,1219.7C179.4,1219.6 183.4,1217.6 184.6,1217.0C185.7,1216.4 187.5,1215.3 188.4,1214.8C189.3,1214.2 191.4,1212.0 192.3,1212.0C193.2,1212.1 194.8,1214.7 196.1,1215.2C197.4,1215.7 202.1,1215.8 203.8,1216.1C205.4,1216.4 208.8,1217.2 210.2,1217.9C211.5,1218.6 214.3,1221.4 215.3,1222.3C216.3,1223.2 218.3,1224.7 219.1,1225.7C219.9,1226.7 221.5,1229.6 222.2,1230.7C223.0,1231.7 224.7,1233.9 225.5,1234.7C226.4,1235.5 228.4,1237.1 229.4,1237.5C230.3,1237.8 233.2,1238.4 233.7,1237.9C234.3,1237.4 234.7,1234.0 234.2,1233.1C233.8,1232.2 230.9,1231.5 229.9,1230.3C228.9,1229.1 226.6,1224.1 225.5,1222.7C224.5,1221.3 222.3,1218.6 221.2,1218.3C220.1,1218.0 217.0,1220.5 215.8,1220.1C214.6,1219.7 212.1,1215.8 210.9,1215.2C209.8,1214.6 206.9,1220.6 206.3,1214.8C205.8,1208.9 207.2,1170.9 206.3,1164.8Z" fill="#338cf0" stroke="#338cf0" stroke-width="0.8"/>
<path d="M251.9,1259.0C253.9,1258.8 261.3,1259.0 265.2,1259.0C269.2,1259.0 280.3,1259.0 285.7,1259.0C291.1,1259.0 306.9,1259.0 311.3,1259.0C315.7,1259.0 322.0,1259.0 323.6,1259.0C325.2,1259.1 323.9,1259.5 324.9,1259.7C325.8,1260.0 330.3,1260.8 331.8,1261.1C333.3,1261.4 336.8,1262.4 337.9,1262.4C339.0,1262.5 340.1,1261.3 341.0,1261.4C341.9,1261.6 344.7,1263.1 345.9,1263.8C347.0,1264.5 350.1,1266.7 351.0,1267.4C351.8,1268.1 352.7,1268.9 353.3,1269.3C353.9,1269.8 356.0,1270.5 356.4,1271.6C356.7,1272.7 356.6,1277.4 356.4,1278.5C356.1,1279.5 354.6,1280.2 354.6,1280.6C354.5,1281.0 355.2,1281.9 355.8,1281.8C356.5,1281.8 358.9,1280.7 359.9,1280.3C361.0,1280.0 364.4,1279.2 365.1,1278.8C365.7,1278.4 364.8,1277.4 365.6,1276.9C366.4,1276.5 370.7,1275.3 372.0,1274.8C373.2,1274.2 374.6,1272.5 376.1,1272.2C377.5,1271.9 383.2,1272.3 384.3,1272.2C385.4,1272.1 385.2,1271.6 385.5,1271.3C385.9,1270.9 387.0,1269.9 387.3,1269.3C387.6,1268.8 387.8,1267.3 388.1,1266.7C388.4,1266.2 389.4,1264.5 389.9,1264.3C390.4,1264.0 392.0,1264.5 392.5,1264.6C392.9,1264.7 393.6,1264.8 393.7,1265.4C393.9,1266.1 393.5,1269.2 393.7,1270.0C394.0,1270.8 396.1,1272.0 395.8,1272.6C395.5,1273.1 392.1,1274.0 391.2,1274.4C390.3,1274.9 388.7,1275.6 388.1,1276.0C387.5,1276.4 386.5,1277.7 386.3,1278.2C386.1,1278.7 386.1,1279.9 386.3,1280.3C386.5,1280.8 388.1,1281.9 388.1,1282.1C388.1,1282.4 387.0,1282.6 386.6,1282.7C386.1,1282.9 384.8,1283.1 384.3,1283.3C383.7,1283.6 382.4,1284.5 381.7,1284.8C381.0,1285.2 378.4,1285.6 377.9,1286.0C377.4,1286.4 377.7,1287.7 377.3,1288.4C377.0,1289.1 375.5,1291.2 375.0,1291.9C374.6,1292.5 374.0,1293.0 373.8,1293.6C373.5,1294.1 372.7,1295.6 372.7,1296.4C372.8,1297.3 374.2,1300.1 374.0,1300.9C373.8,1301.6 371.9,1302.1 371.2,1302.5C370.5,1302.9 368.5,1304.1 367.9,1304.4C367.2,1304.7 366.1,1304.8 365.6,1305.2C365.0,1305.6 363.7,1307.1 363.0,1307.6C362.4,1308.2 360.4,1309.1 359.9,1309.8C359.5,1310.4 359.0,1312.6 358.9,1313.2C358.8,1313.8 358.9,1314.3 359.2,1315.0C359.4,1315.7 360.9,1318.4 361.2,1319.4C361.6,1320.4 362.2,1323.0 362.2,1324.0C362.3,1324.9 361.8,1326.8 361.5,1327.2C361.1,1327.6 359.9,1327.6 359.4,1327.2C359.0,1326.8 357.8,1324.7 357.4,1324.0C356.9,1323.2 355.9,1321.4 355.6,1320.7C355.3,1319.9 355.2,1318.0 354.8,1317.3C354.4,1316.7 352.9,1314.9 352.3,1314.8C351.6,1314.6 349.7,1315.9 348.9,1315.8C348.2,1315.7 346.7,1314.2 345.9,1314.0C345.1,1313.8 342.9,1314.2 342.0,1314.2C341.1,1314.3 338.5,1314.1 338.2,1314.5C337.8,1314.9 339.2,1317.0 338.9,1317.3C338.6,1317.7 336.5,1317.2 335.6,1317.1C334.8,1316.9 332.8,1316.2 331.8,1316.1C330.8,1315.9 328.0,1315.7 327.2,1315.8C326.3,1315.9 325.4,1316.4 324.6,1316.8C323.8,1317.2 321.0,1318.5 320.3,1319.1C319.5,1319.7 318.2,1321.2 318.0,1321.9C317.7,1322.7 319.0,1325.2 318.5,1325.5C318.0,1325.7 314.3,1324.7 313.6,1324.2C312.9,1323.7 312.9,1322.0 312.6,1321.4C312.2,1320.9 311.1,1320.1 310.5,1319.4C310.0,1318.7 308.3,1316.0 307.7,1315.5C307.1,1315.1 305.7,1315.3 305.2,1315.5C304.6,1315.8 304.0,1317.5 303.4,1317.6C302.7,1317.7 300.3,1316.5 299.8,1316.1C299.2,1315.6 299.4,1314.1 298.8,1313.5C298.2,1312.8 295.6,1310.7 294.7,1310.3C293.7,1309.9 290.8,1310.2 290.3,1310.3C289.8,1310.5 291.1,1311.5 290.3,1311.6C289.5,1311.8 285.1,1312.1 283.1,1311.6C281.2,1311.2 275.5,1308.3 273.7,1307.9C271.8,1307.5 268.7,1308.9 267.5,1308.4C266.4,1308.0 265.0,1305.1 263.9,1304.4C262.9,1303.7 259.6,1303.6 258.6,1302.8C257.5,1301.9 255.8,1298.3 255.2,1297.2C254.7,1296.2 254.3,1294.7 253.7,1293.9C253.1,1293.1 250.9,1291.3 250.4,1290.4C249.8,1289.5 248.9,1287.7 248.8,1286.3C248.7,1284.9 249.5,1280.6 249.6,1278.5C249.7,1276.4 250.0,1270.1 249.9,1268.1C249.7,1266.0 247.8,1262.1 248.1,1261.1C248.3,1260.0 249.9,1259.3 251.9,1259.0Z" fill="#338cf0" stroke="#338cf0" stroke-width="0.8"/>
<path d="M206.3,1164.8C206.9,1159.0 210.1,1164.9 211.5,1165.4C212.8,1166.0 216.5,1169.2 217.9,1169.2C219.2,1169.2 221.6,1166.1 223.0,1165.4C224.3,1164.8 227.9,1164.0 229.4,1163.5C230.9,1163.0 234.6,1162.1 235.8,1161.5C237.0,1161.0 238.6,1158.4 239.6,1158.9C240.7,1159.3 243.8,1165.1 244.7,1165.4C245.7,1165.8 247.2,1161.5 248.1,1161.5C249.0,1161.6 251.0,1165.6 252.4,1166.1C253.8,1166.5 258.3,1165.1 260.1,1165.4C261.9,1165.8 266.3,1168.1 267.8,1169.2C269.3,1170.4 271.4,1174.5 272.9,1175.4C274.4,1176.2 278.9,1176.5 280.6,1176.5C282.2,1176.5 285.8,1174.8 287.0,1175.4C288.2,1175.9 290.1,1181.1 290.8,1181.2C291.6,1181.3 292.5,1177.5 293.4,1176.5C294.3,1175.6 297.0,1173.0 298.5,1172.9C300.0,1172.9 304.4,1175.6 306.2,1175.9C308.0,1176.3 312.5,1176.4 313.9,1175.9C315.2,1175.5 316.8,1171.4 317.7,1171.7C318.6,1172.1 320.8,1178.6 321.5,1178.9C322.3,1179.2 323.6,1175.5 324.1,1174.1C324.6,1172.8 325.6,1168.3 326.1,1167.4C326.7,1166.4 328.6,1166.2 329.2,1166.1C329.9,1165.9 331.3,1165.8 331.8,1166.1C332.3,1166.4 333.0,1168.0 333.6,1168.6C334.2,1169.2 336.1,1171.1 336.9,1171.1C337.7,1171.1 339.8,1167.7 340.7,1168.6C341.6,1169.5 343.7,1178.5 344.6,1178.9C345.5,1179.3 348.0,1173.3 348.4,1171.7C348.9,1170.1 348.1,1166.4 348.4,1165.4C348.7,1164.4 350.1,1163.3 351.0,1163.2C351.9,1163.0 355.1,1163.7 356.1,1164.2C357.1,1164.6 358.9,1166.3 359.2,1167.4C359.5,1168.4 359.0,1171.7 358.7,1172.9C358.3,1174.1 356.1,1176.8 356.1,1177.7C356.1,1178.6 359.0,1179.8 358.7,1180.6C358.4,1181.4 354.9,1184.3 353.5,1184.6C352.1,1184.9 347.5,1183.0 346.6,1183.5C345.7,1184.0 346.2,1187.7 345.9,1189.0C345.5,1190.3 344.0,1193.4 343.3,1194.3C342.6,1195.3 340.4,1196.2 339.5,1196.9C338.5,1197.6 336.0,1199.8 335.1,1200.5C334.2,1201.2 332.2,1202.1 331.5,1202.9C330.8,1203.7 329.8,1206.4 329.2,1207.3C328.6,1208.3 326.8,1210.2 326.4,1211.1C326.0,1212.0 325.5,1214.1 325.6,1215.2C325.8,1216.3 326.8,1219.4 327.4,1220.5C328.1,1221.7 330.2,1224.0 331.3,1224.8C332.3,1225.7 335.2,1227.2 336.4,1227.8C337.6,1228.4 340.2,1229.4 341.3,1229.9C342.3,1230.3 344.3,1231.2 345.3,1231.5C346.4,1231.8 349.2,1232.5 350.2,1232.7C351.3,1232.9 353.5,1233.1 354.3,1233.5C355.1,1233.9 356.6,1234.8 356.9,1235.9C357.2,1237.0 356.7,1241.5 356.9,1242.9C357.1,1244.2 358.2,1246.4 358.7,1247.3C359.2,1248.2 360.6,1250.3 361.2,1250.6C361.8,1250.9 363.3,1250.7 363.8,1250.2C364.3,1249.8 365.4,1247.6 365.6,1246.6C365.8,1245.6 365.5,1242.6 365.3,1241.7C365.1,1240.8 363.4,1239.5 363.8,1238.6C364.2,1237.8 368.0,1235.6 368.9,1234.7C369.8,1233.8 370.9,1232.0 371.2,1231.1C371.5,1230.1 371.6,1227.6 371.2,1226.5C370.8,1225.5 367.9,1223.3 367.6,1222.3C367.3,1221.2 368.6,1218.6 368.6,1217.5C368.6,1216.3 367.7,1213.9 367.6,1212.5C367.6,1211.0 367.4,1205.7 368.1,1204.9C368.8,1204.1 372.5,1205.4 373.8,1205.4C375.0,1205.4 377.6,1204.6 378.6,1204.9C379.7,1205.2 381.9,1207.5 383.0,1208.3C384.1,1209.0 387.4,1210.2 388.1,1211.1C388.8,1212.0 389.3,1215.0 389.4,1216.1C389.4,1217.2 388.3,1219.6 388.6,1220.5C388.9,1221.5 391.2,1223.8 392.2,1224.0C393.2,1224.1 396.2,1222.5 397.1,1221.8C397.9,1221.2 399.1,1219.2 399.6,1218.3C400.2,1217.5 401.4,1214.7 401.9,1214.8C402.4,1214.9 403.3,1218.1 404.0,1219.2C404.6,1220.3 406.7,1222.9 407.3,1224.0C407.9,1225.1 408.9,1228.0 409.3,1229.0C409.8,1230.1 410.6,1232.3 411.1,1233.1C411.7,1233.9 413.3,1235.3 414.2,1235.9C415.1,1236.5 418.1,1237.3 418.8,1237.9C419.6,1238.4 420.0,1240.2 420.6,1240.9C421.2,1241.7 423.5,1243.2 423.9,1244.0C424.4,1244.7 425.0,1246.6 424.7,1247.3C424.4,1248.1 422.5,1249.7 421.6,1250.2C420.7,1250.7 418.0,1251.2 417.0,1251.7C416.1,1252.2 415.0,1254.2 413.7,1254.5C412.4,1254.9 407.9,1254.5 406.0,1254.5C404.1,1254.6 398.8,1254.4 397.3,1254.9C395.8,1255.3 394.1,1257.6 393.2,1258.3C392.4,1259.1 390.3,1260.7 389.9,1261.4C389.5,1262.1 390.1,1263.6 389.9,1264.3C389.7,1264.9 388.4,1266.2 388.1,1266.7C387.8,1267.3 387.6,1268.8 387.3,1269.3C387.0,1269.9 385.9,1270.9 385.5,1271.3C385.2,1271.6 385.4,1272.1 384.3,1272.2C383.2,1272.3 377.5,1271.9 376.1,1272.2C374.6,1272.5 373.2,1274.2 372.0,1274.8C370.7,1275.3 366.4,1276.5 365.6,1276.9C364.8,1277.4 365.7,1278.4 365.1,1278.8C364.4,1279.2 361.0,1280.0 359.9,1280.3C358.9,1280.7 356.5,1281.8 355.8,1281.8C355.2,1281.9 354.5,1281.0 354.6,1280.6C354.6,1280.2 356.1,1279.5 356.4,1278.5C356.6,1277.4 356.7,1272.7 356.4,1271.6C356.0,1270.5 353.9,1269.8 353.3,1269.3C352.7,1268.9 351.8,1268.1 351.0,1267.4C350.1,1266.7 347.0,1264.5 345.9,1263.8C344.7,1263.1 341.9,1261.6 341.0,1261.4C340.1,1261.3 339.0,1262.5 337.9,1262.4C336.8,1262.4 333.3,1261.4 331.8,1261.1C330.3,1260.8 325.8,1260.0 324.9,1259.7C323.9,1259.5 325.2,1259.1 323.6,1259.0C322.0,1259.0 315.7,1259.0 311.3,1259.0C306.9,1259.0 291.1,1259.0 285.7,1259.0C280.3,1259.0 269.2,1259.0 265.2,1259.0C261.3,1259.0 253.8,1259.4 251.9,1259.0C250.0,1258.6 249.7,1256.4 248.6,1255.6C247.4,1254.8 243.2,1253.0 242.2,1252.0C241.2,1251.1 240.7,1248.7 240.1,1247.7C239.5,1246.7 237.8,1244.2 237.1,1243.2C236.3,1242.3 234.1,1240.1 233.7,1239.4C233.4,1238.7 234.2,1237.8 234.2,1237.1C234.3,1236.3 234.8,1233.9 234.2,1233.1C233.7,1232.3 230.9,1231.5 229.9,1230.3C228.9,1229.1 226.6,1224.1 225.5,1222.7C224.5,1221.3 222.3,1218.6 221.2,1218.3C220.1,1218.0 217.0,1220.5 215.8,1220.1C214.6,1219.7 212.1,1215.8 210.9,1215.2C209.8,1214.6 206.9,1220.6 206.3,1214.8C205.8,1208.9 205.7,1170.6 206.3,1164.8Z" fill="#0070ec" stroke="#0070ec" stroke-width="0.8"/>
</g>
</svg>
<div class="t logo-your" style="top:13.17px;font-size:69.5px;font-weight:400;color:#8b9094;letter-spacing:0.8px;-webkit-text-stroke:1.7px #8b9094;font-family:'DejaVu Sans', 'Liberation Sans', sans-serif;left:18.50px;">your</div>
<div class="t logo-logo" style="top:10.21px;font-size:73px;font-weight:700;color:#0070ec;-webkit-text-stroke:4.0px #0070ec;left:194.60px;transform:scaleX(0.84);transform-origin:left top;">L</div>
<div class="t logo-logo" style="top:10.21px;font-size:73px;font-weight:700;color:#0070ec;-webkit-text-stroke:4.0px #0070ec;left:235.60px;transform:scaleX(1.03);transform-origin:left top;">O</div>
<div class="t logo-logo" style="top:10.21px;font-size:73px;font-weight:700;color:#0070ec;-webkit-text-stroke:4.0px #0070ec;left:298.20px;transform:scaleX(0.99);transform-origin:left top;">G</div>
<div class="t logo-logo" style="top:10.21px;font-size:73px;font-weight:700;color:#0070ec;-webkit-text-stroke:4.0px #0070ec;left:357.40px;transform:scaleX(1.03);transform-origin:left top;">O</div>
<div class="t " style="top:6.92px;font-size:19px;font-weight:400;color:#8b9094;letter-spacing:0.5px;left:418.00px;">TM</div>
<div class="t " style="top:8.53px;font-size:38.95px;font-weight:700;color:#0f2744;right:17.00px;">Local SEO Report</div>
<div class="t " style="top:68.86px;font-size:33.6px;font-weight:400;color:#0f2744;right:20.00px;">Mar 2024</div>
<div class="t " style="top:120.58px;font-size:65px;font-weight:700;color:#0f2744;left:600.30px;width:1200px;text-align:center;">Local SEO Report</div>
<div class="t " style="top:294.30px;font-size:28px;font-weight:400;color:#253b54;letter-spacing:0.65px;-webkit-text-stroke:0.5px #253b54;left:62.20px;">Google Business Profile Views</div>
<div class="t " style="top:294.30px;font-size:28px;font-weight:400;color:#253b54;letter-spacing:0.72px;-webkit-text-stroke:0.5px #253b54;left:957.00px;">Google Business Profile Clicks</div>
<div class="t " style="top:295.10px;font-size:28px;font-weight:700;color:#0f2846;right:46.50px;">272</div>
<div class="t " style="top:951.10px;font-size:28px;font-weight:400;color:#253b54;letter-spacing:0.55px;-webkit-text-stroke:0.5px #253b54;left:49.50px;">Sessions</div>
<div class="t " style="top:951.10px;font-size:28px;font-weight:700;color:#0f2846;right:1259.50px;">32,324</div>
<div class="t " style="top:951.50px;font-size:28px;font-weight:400;color:#253b54;letter-spacing:0.55px;-webkit-text-stroke:0.5px #253b54;left:1263.30px;">All Web Sessions</div>
<div class="t " style="top:545.00px;font-size:28px;font-weight:400;color:#253b54;-webkit-text-stroke:0.3px #253b54;left:376.00px;">Search</div>
<div class="t " style="top:603.50px;font-size:28px;font-weight:400;color:#253b54;letter-spacing:0.9px;-webkit-text-stroke:0.3px #253b54;left:376.50px;">Maps</div>
<div class="t " style="top:545.00px;font-size:28px;font-weight:700;color:#253b54;right:1867.50px;">58</div>
<div class="t " style="top:603.50px;font-size:28px;font-weight:700;color:#253b54;right:1867.50px;">46</div>
<div class="t " style="top:383.67px;font-size:26.5px;font-weight:400;color:#4b5c6e;right:1411.50px;">12</div>
<div class="t " style="top:504.47px;font-size:26.5px;font-weight:400;color:#4b5c6e;right:1411.50px;">10</div>
<div class="t " style="top:624.37px;font-size:26.5px;font-weight:400;color:#4b5c6e;right:1411.50px;">8</div>
<div class="t " style="top:744.17px;font-size:26.5px;font-weight:400;color:#4b5c6e;right:1411.50px;">6</div>
<div class="t " style="top:792.57px;font-size:26.5px;font-weight:400;color:#4b5c6e;letter-spacing:0.95px;left:1033.70px;">11 Mar</div>
<div class="t " style="top:792.57px;font-size:26.5px;font-weight:400;color:#4b5c6e;letter-spacing:0.55px;left:1442.00px;">18 Mar</div>
<div class="t " style="top:792.57px;font-size:26.5px;font-weight:400;color:#4b5c6e;letter-spacing:0.6px;left:1840.90px;">25 Mar</div>
<div class="t " style="top:792.57px;font-size:26.5px;font-weight:400;color:#4b5c6e;letter-spacing:0.7px;left:2223.30px;">1 Apr</div>
<div class="t " style="top:1224.64px;font-size:70px;font-weight:700;color:#0f2744;letter-spacing:0.8px;left:1022.70px;width:1200px;text-align:center;">7,394</div>
<div class="t " style="top:1302.70px;font-size:28px;font-weight:400;color:#a3a8ad;letter-spacing:0.1px;left:1022.30px;width:1200px;text-align:center;">Sessions</div>
<div class="t " style="top:1052.40px;font-size:28px;font-weight:400;color:#55585b;-webkit-text-stroke:0.3px #55585b;left:1988.00px;">Google Search</div>
<div class="t " style="top:1053.04px;font-size:27px;font-weight:700;color:#55585b;right:94.20px;">1,147</div>
<div class="t " style="top:1107.13px;font-size:28px;font-weight:400;color:#55585b;-webkit-text-stroke:0.3px #55585b;left:1988.00px;">Paid Search</div>
<div class="t " style="top:1107.77px;font-size:27px;font-weight:700;color:#55585b;right:94.20px;">1,106</div>
<div class="t " style="top:1161.86px;font-size:28px;font-weight:400;color:#55585b;-webkit-text-stroke:0.3px #55585b;left:1988.00px;">Direct</div>
<div class="t " style="top:1162.50px;font-size:27px;font-weight:700;color:#55585b;right:94.20px;">1,019</div>
<div class="t " style="top:1216.59px;font-size:28px;font-weight:400;color:#55585b;-webkit-text-stroke:0.3px #55585b;left:1988.00px;">Referral</div>
<div class="t " style="top:1217.23px;font-size:27px;font-weight:700;color:#55585b;right:94.20px;">997</div>
<div class="t " style="top:1271.32px;font-size:28px;font-weight:400;color:#55585b;-webkit-text-stroke:0.3px #55585b;left:1988.00px;">Display</div>
<div class="t " style="top:1271.96px;font-size:27px;font-weight:700;color:#55585b;right:94.20px;">917</div>
<div class="t " style="top:1326.05px;font-size:28px;font-weight:400;color:#55585b;-webkit-text-stroke:0.3px #55585b;left:1988.00px;">Social</div>
<div class="t " style="top:1326.69px;font-size:27px;font-weight:700;color:#55585b;right:94.20px;">819</div>
<div class="t " style="top:1380.78px;font-size:28px;font-weight:400;color:#55585b;-webkit-text-stroke:0.3px #55585b;left:1988.00px;">(Other)</div>
<div class="t " style="top:1381.42px;font-size:27px;font-weight:700;color:#55585b;right:94.20px;">697</div>
<div class="t " style="top:1435.51px;font-size:28px;font-weight:400;color:#55585b;-webkit-text-stroke:0.3px #55585b;left:1988.00px;">Email</div>
<div class="t " style="top:1436.15px;font-size:27px;font-weight:700;color:#55585b;right:94.20px;">692</div>
</body></html>
